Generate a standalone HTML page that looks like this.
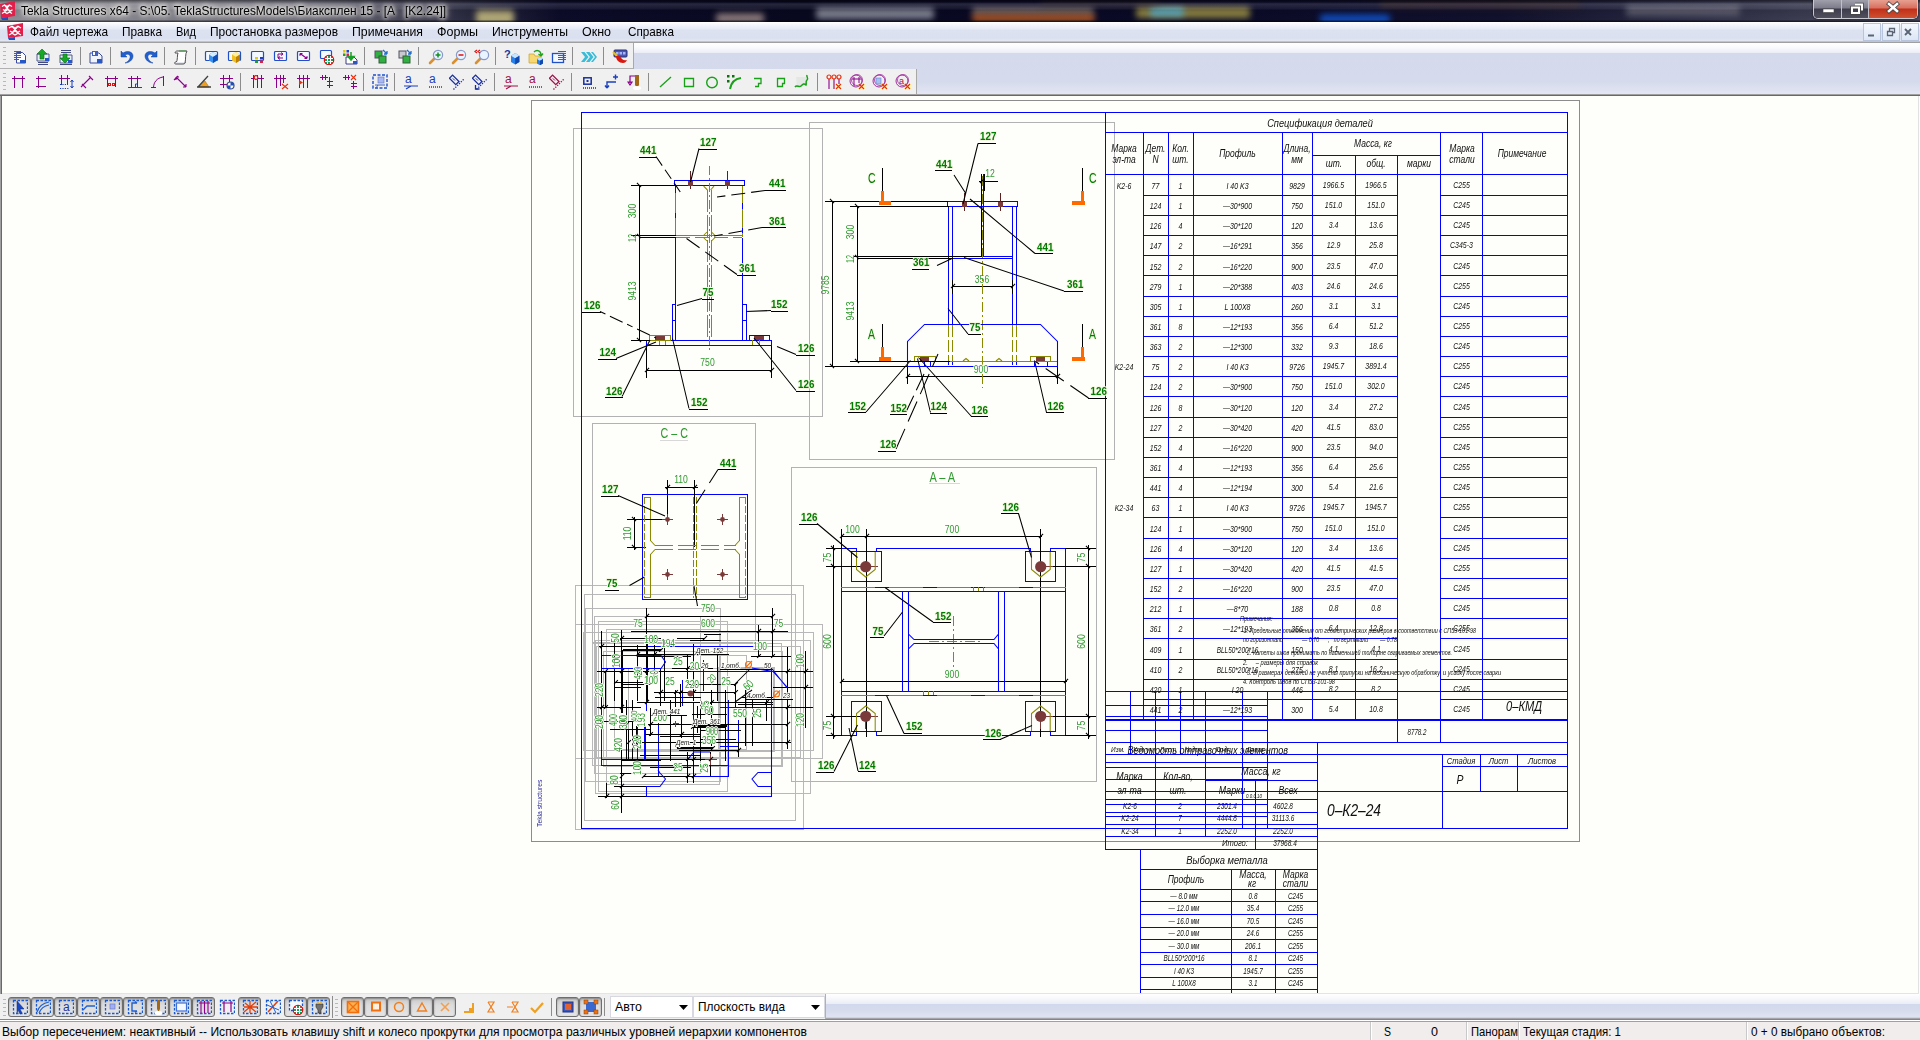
<!DOCTYPE html><html><head><meta charset="utf-8"><title>Tekla Structures</title><style>
*{box-sizing:border-box;margin:0;padding:0}
html,body{width:1920px;height:1040px;overflow:hidden;background:#fefefa;font-family:"Liberation Sans",sans-serif;font-size:12px;color:#000}
.abs{position:absolute}
#title{left:0;top:0;width:1920px;height:22px;background:linear-gradient(90deg,#8f8f97 0px,#85858f 120px,#6a6a78 300px,#2a2a40 470px,#0c0c2a 560px,#080820 800px,#0a0a28 1200px,#11112e 1500px,#2b2b44 1700px,#3c3c52 1800px,#4a4a60 1920px);overflow:hidden}
#title .shade{left:0;top:0;width:1920px;height:22px;background:linear-gradient(180deg,rgba(0,0,0,.45) 0,rgba(0,0,0,.15) 2px,rgba(255,255,255,.12) 4px,rgba(255,255,255,.05) 9px,rgba(0,0,0,.10) 10px,rgba(0,0,0,.0) 20px,rgba(0,0,0,.55) 21px)}
#title .blob{position:absolute;filter:blur(3px);border-radius:3px}
#ttext{left:21px;top:2px;height:18px;line-height:18px;font-size:12.6px;white-space:nowrap;color:#000;text-shadow:0 0 4px #fff,0 0 6px #fff,0 0 8px #e8e0d0,0 0 10px #d0c8b8;transform-origin:0 0}
#menu{left:0;top:22px;width:1920px;height:21px;background:linear-gradient(180deg,#ffffff 0,#f3f5fb 3px,#e6eaf6 7px,#dde2f1 8px,#dbe0f0 16px,#e4e8f4 19px,#a0a0a0 20px);}
.mi{position:absolute;top:3px;height:15px;line-height:15px;font-size:12.4px;white-space:nowrap;transform-origin:0 0}
#tb{left:0;top:43px;width:1920px;height:53px;background:linear-gradient(180deg,#ffffff 0,#fafbfd 4px,#eceef7 9.5px,#d4d9ec 10px,#d5daec 38px,#dde1f0 46px,#e4e7f3 51px,#a0a0a0 51px,#a0a0a0 52px,#696969 52px,#696969 53px)}
.tbl{position:absolute;background:#f0f0f0}
.sep{position:absolute;width:1px;background:#8c8c8c}
.grip{position:absolute;width:3px;height:18px;background:repeating-linear-gradient(180deg,#b8b8b8 0,#b8b8b8 1px,transparent 1px,transparent 4px)}
#btb{left:0;top:994px;width:1920px;height:28px;background:linear-gradient(180deg,#ffffff 0,#f8f9fc 4px,#eceef7 9.5px,#d3d9ec 10px,#d6dbed 16px,#dfe3f1 23px,#c0c0c8 24px,#8a8a8a 25px,#808080 26px,#ffffff 26px,#ffffff 27px,#a0a0a0 27px,#a0a0a0 28px)}
#status{left:0;top:1022px;width:1920px;height:18px;background:#f0edec}
.st{position:absolute;top:3px;height:15px;line-height:15px;font-size:12.4px;white-space:nowrap;transform-origin:0 0}
.pb{position:absolute;top:3px;width:23px;height:20px;border:1px solid #6e6e6e;border-radius:3px;background:linear-gradient(180deg,#c8c8c8,#dcdcdc 40%,#e4e4e4);box-shadow:inset 0 1px 2px rgba(0,0,0,.35)}
.combo{position:absolute;top:2px;height:22px;background:#fff;border:1px solid #d8d8e0;font-size:12.4px;line-height:20px;padding-left:4px;white-space:nowrap}
</style></head><body><div class="abs" style="left:0;top:96px;width:1920px;height:898px;overflow:hidden;background:#fefefa"><svg class="abs" style="left:0;top:-96px;will-change:transform" width="1920" height="1040" viewBox="0 0 1920 1040"><g shape-rendering="crispEdges" fill="none" stroke-width="1">
<path stroke="#b8b8b8" d="M575 585.5H804M575 829.5H804M575.5 585V830M803.5 585V830M584 594.5H796M584 820.5H796M584.5 594V821M795.5 594V821M585 608.5H721M585 781.5H721M585.5 608V782M720.5 608V782M594 616.5H701M594 773.5H701M594.5 616V774M700.5 616V774M598 621.5H728M598 791.5H728M598.5 621V792M727.5 621V792M575 624.5H823M575 758.5H823M575.5 624V759M822.5 624V759M606 629.5H720M606 784.5H720M606.5 629V785M719.5 629V785M583 632.5H814M583 750.5H814M583.5 632V751M813.5 632V751M592 643.5H782M592 765.5H782M592.5 643V766M781.5 643V766M603 651.5H783M603 766.5H783M603.5 651V767M782.5 651V767M628 668.5H774M628 751.5H774M628.5 668V752M773.5 668V752M595 640.5H811M595 793.5H811M595.5 640V794M810.5 640V794M614 655.5H747M614 749.5H747M614.5 655V750M746.5 655V750M718 667.5H775M718 751.5H775M718.5 667V752M774.5 667V752M596 646.5H801M596 757.5H801M596.5 646V758M800.5 646V758"/>
</g>
<g shape-rendering="crispEdges"></g>
<g fill="none" stroke-width="1.05">
</g>
<g font-family="Liberation Sans, sans-serif"></g><g shape-rendering="crispEdges" fill="none" stroke-width="1">
<path stroke="#8c8c8c" d="M531 100.5H1580M531 841.5H1580M531.5 100V842M1579.5 100V842"/>
<path stroke="#b2b2b2" d="M573 128.5H823M573 416.5H823M573.5 128V417M822.5 128V417M809 122.5H1115M809 459.5H1115M809.5 122V460M1114.5 122V460M592 423.5H756M592 642.5H756M592.5 423V643M755.5 423V643M791 467.5H1097M791 781.5H1097M791.5 467V782M1096.5 467V782"/>
<path stroke="#0000ff" d="M581 112.5H1568M581 828.5H1568M581.5 112V829M1567.5 112V829M674 180.5H745M674 185.5H745M674.5 180V186M744.5 180V186M675.5 186V193M675.5 213V218M675.5 238V341M742.5 203V209M742.5 228V233M742.5 238V341M672 304.5H676M672 340.5H676M672.5 304V341M675.5 304V341M742 304.5H747M742 340.5H747M742.5 304V341M746.5 304V341M672 320.5H676M742 320.5H747M646 340.5H772M646 345.5H772M646.5 340V346M771.5 340V346M749 335.5H770M749 340.5H770M749.5 335V341M769.5 335V341M664 335.5H671M947 201.5H1018M947 206.5H1018M947.5 201V207M1017.5 201V207M948.5 206V325M952.5 206V325M1012.5 206V325M1016.5 206V325M983.5 174V257M952 258.5H1013M984 256.5H1013M914 356.5H936M1030 356.5H1051M924.5 361V367M930.5 361V367M1034.5 361V367M1047.5 361V367M948.5 361V365M952.5 361V365M1012.5 361V365M1016.5 361V365M642 494.5H748M642 599.5H748M642.5 494V600M747.5 494V600M841 548.5H857M876 548.5H1031M1050 548.5H1066M856.5 548V552M876.5 548V552M1030.5 548V552M1050.5 548V552M841 735.5H857M876 735.5H1031M1050 735.5H1066M856.5 731V736M876.5 731V736M1030.5 731V736M1050.5 731V736M841.5 548V736M1065.5 548V736M851 551.5H882M851 581.5H882M851.5 551V582M881.5 551V582M851 701.5H882M851 731.5H882M851.5 701V732M881.5 701V732M1025 551.5H1056M1025 581.5H1056M1025.5 551V582M1055.5 551V582M1025 701.5H1056M1025 731.5H1056M1025.5 701V732M1055.5 701V732M841 591.5H1066M841 691.5H1066M841 587.5H1066M841 695.5H1066M902.5 591V692M908.5 591V692M998.5 591V692M1004.5 591V692M1105 132.5H1568M1105 174.5H1568M1312 155.5H1441M1105.5 112V850M1143.5 132V720M1168.5 132V720M1193.5 132V720M1282.5 132V720M1312.5 132V720M1482.5 132V720M1355.5 155V720M1397.5 155V743M1440.5 132V743M1143 195.5H1398M1440 195.5H1568M1143 215.5H1398M1440 215.5H1568M1143 235.5H1398M1440 235.5H1568M1143 255.5H1398M1440 255.5H1568M1143 275.5H1398M1440 275.5H1568M1143 296.5H1398M1440 296.5H1568M1143 316.5H1398M1440 316.5H1568M1143 336.5H1398M1440 336.5H1568M1143 356.5H1398M1440 356.5H1568M1143 376.5H1398M1440 376.5H1568M1143 396.5H1398M1440 396.5H1568M1143 417.5H1398M1440 417.5H1568M1143 437.5H1398M1440 437.5H1568M1143 457.5H1398M1440 457.5H1568M1143 477.5H1398M1440 477.5H1568M1143 497.5H1398M1440 497.5H1568M1143 517.5H1398M1440 517.5H1568M1143 538.5H1398M1440 538.5H1568M1143 558.5H1398M1440 558.5H1568M1143 578.5H1398M1440 578.5H1568M1143 598.5H1398M1440 598.5H1568M1143 618.5H1398M1440 618.5H1568M1143 638.5H1398M1440 638.5H1568M1143 659.5H1398M1440 659.5H1568M1143 679.5H1398M1440 679.5H1568M1143 699.5H1398M1440 699.5H1568M1143 719.5H1398M1440 719.5H1568M1105 719.5H1144M1397 719.5H1441M1105 720.5H1568M1105 742.5H1568M1105 691.5H1568M1130.5 691V755M1155.5 691V755M1180.5 691V755M1205.5 691V755M1242.5 691V755M1267.5 691V829M1155.5 754V829M1205.5 754V829M1242.5 754V829M1105 705.5H1268M1105 716.5H1268M1105 730.5H1268M1105 767.5H1268M1105 779.5H1268M1105 791.5H1268M1105 804.5H1268M1105 816.5H1268M1105 754.5H1568M1267 791.5H1568M1442 766.5H1568M1442.5 754V829M1480.5 754V792M1517.5 754V792M1317.5 742V994M1105 762.5H1318M1205 780.5H1318M1105 799.5H1318M1105 812.5H1318M1105 824.5H1318M1105 836.5H1318M1105 849.5H1318M1155.5 762V837M1205.5 762V837M1255.5 780V850M1140 869.5H1318M1140 889.5H1318M1140 901.5H1318M1140 914.5H1318M1140 927.5H1318M1140 939.5H1318M1140 952.5H1318M1140 964.5H1318M1140 977.5H1318M1140 989.5H1318M1140.5 849V994M1231.5 869V994M1275.5 869V994"/>
<path stroke="#8a8a00" stroke-dasharray="9 3 2 3" d="M709.5 166V353"/>
<path stroke="#8a8a00" stroke-dasharray="22 3" d="M707.5 190V340M711.5 190V340"/>
<path stroke="#8a8a00" d="M676 235.5H742M675.5 193V213M675.5 218V236M742.5 186V203M742.5 209V228M742.5 233V237M659.5 340V345M665.5 340V345M752.5 340V345M759.5 340V345M649 335.5H671M649 340.5H671M649.5 335V341M670.5 335V341M914 361.5H1058M914 356.5H936M914 361.5H936M914.5 356V362M935.5 356V362M1030 356.5H1051M1030 361.5H1051M1030.5 356V362M1050.5 356V362M650.5 497V541M650.5 554V598M644 497.5H651M644 597.5H651M739.5 497V541M739.5 554V598M739 497.5H746M739 597.5H746M973.5 587V591M978.5 587V591M983.5 587V591M923.5 691V695M928.5 691V695M933.5 691V695"/>
<path stroke="#8a8a00" stroke-dasharray="14 5" d="M676 237.5H742"/>
<path stroke="#5a2020" d="M690.5 171V189M727.5 171V189M964.5 193V211M1000.5 193V211"/>
<path stroke="#000" d="M639.5 185V341M631 185.5H675M631 235.5H676M639 237.5H676M631 340.5H650M646 370.5H772M646.5 346V378M771.5 346V378M639 157.5H657M699 149.5H717M765 190.5H786M762 227.5H786M737 275.5H756M702 299.5H714M771 311.5H788M582 312.5H601M598 359.5H617M605 397.5H623M689 409.5H708M796 355.5H815M796 391.5H815M981.5 174V257M832.5 201V367M825 201.5H948M825 366.5H908M857.5 206V362M850 206.5H949M854 256.5H982M857 258.5H953M850 361.5H950M979 181.5H998M984.5 174V191M952 286.5H1013M952.5 280V294M1012.5 280V294M907 376.5H1058M907.5 366V384M1057.5 366V384M882.5 168V201M882.5 324V356M1082.5 168V201M1082.5 324V356M978 143.5H996M935 170.5H952M1035 253.5H1053M912 269.5H929M1064 291.5H1083M968 334.5H981M848 412.5H866M890 414.5H907M930 413.5H947M971 416.5H988M1046 412.5H1064M1088 398.5H1107M878 451.5H896M694.5 480V547M665 487.5H698M667.5 480V520M634.5 517V550M627 519.5H668M627 547.5H646M601 496.5H619M718 469.5H736M605 590.5H619M841 536.5H1042M841.5 529V549M866.5 529V737M1040.5 529V737M833.5 545V739M1088.5 545V739M826 548.5H842M1065 548.5H1096M826 566.5H867M1040 566.5H1096M826 716.5H867M1040 716.5H1096M826 735.5H842M1065 735.5H1096M841 681.5H1067M799 524.5H818M1001 513.5H1019M933 622.5H951M870 637.5H884M904 733.5H922M983 739.5H1001M816 772.5H834M858 771.5H876"/>
<path stroke="#8a8a00" stroke-dasharray="12 3" d="M948.5 325V361M952.5 325V361M1012.5 325V361M1016.5 325V361"/>
<path stroke="#8a8a00" stroke-dasharray="10 3 2 3" d="M982.5 176V388M953.5 616V669M929 641.5H980"/>
<path stroke="#d8d8d8" d="M660 440.5H688M929 483.5H960"/>
<path stroke="#8a8a00" stroke-dasharray="7 2" d="M644.5 497V598M745.5 497V598M693.5 497V598M696.5 497V598"/>
<path stroke="#8a8a00" stroke-dasharray="18 5" d="M655 545.5H736M655 549.5H736"/>
<path stroke="#7a3a3a" d="M662 519.5H673M667.5 514V525M717 519.5H728M722.5 514V525M662 574.5H673M667.5 569V580M717 574.5H728M722.5 569V580M871 566.5H878M871 716.5H878M865.5 722V729M1046 566.5H1053M1046 716.5H1053M1040.5 722V729"/>
<path stroke="#8a8a00" stroke-dasharray="34 14" d="M841 587.5H1066M841 695.5H1066"/>
</g>
<g shape-rendering="crispEdges"><rect x="655" y="336" width="10" height="4" fill="#7a3a3a"/><rect x="754" y="336" width="10" height="4" fill="#7a3a3a"/><rect x="688" y="181" width="5" height="5" fill="#7a3a3a"/><rect x="725" y="181" width="5" height="5" fill="#7a3a3a"/><rect x="920" y="357" width="9" height="4" fill="#7a3a3a"/><rect x="1036" y="357" width="9" height="4" fill="#7a3a3a"/><rect x="962" y="202" width="5" height="5" fill="#7a3a3a"/><rect x="998" y="202" width="5" height="5" fill="#7a3a3a"/><rect x="879" y="201" width="12" height="4" fill="#ff6a00"/><rect x="881" y="191" width="3" height="11" fill="#ff6a00"/><rect x="879" y="357" width="12" height="4" fill="#ff6a00"/><rect x="881" y="347" width="3" height="11" fill="#ff6a00"/><rect x="1072" y="201" width="13" height="4" fill="#ff6a00"/><rect x="1081" y="191" width="3" height="11" fill="#ff6a00"/><rect x="1072" y="357" width="13" height="4" fill="#ff6a00"/><rect x="1081" y="347" width="3" height="11" fill="#ff6a00"/></g>
<g fill="none" stroke-width="1.05">
<path stroke="#8a8a00" d="M703.6 186.2L707.5 190.0M714.0 186.2L710.6 190.0M703.5 235.5L707.0 232.0M715.0 235.5L711.5 232.0M703.5 237.5L707.0 241.0M715.0 237.5L711.5 241.0M963.0 361.0L966.0 358.5L969.0 361.0M996.0 361.0L999.0 358.5L1002.0 361.0M650.5 540.5L655.0 545.5M650.5 554.5L655.0 549.5M739.5 540.5L735.0 545.5M739.5 554.5L735.0 549.5M856.5 552.0L856.5 569.5L865.7 577.0L875.2 569.5L875.2 552.0M856.5 731.0L856.5 713.5L865.7 706.0L875.2 713.5L875.2 731.0M1031.5 552.0L1031.5 569.5L1040.7 577.0L1050.2 569.5L1050.2 552.0M1031.5 731.0L1031.5 713.5L1040.7 706.0L1050.2 713.5L1050.2 731.0"/>
<path stroke="#000" d="M636.9 182.9L641.1 187.1M636.9 233.9L641.1 238.1M636.9 337.9L641.1 342.1M644.9 372.1L649.1 367.9M769.9 372.1L774.1 367.9M699.0 148.5L690.5 182.0M702.0 298.5L677.0 305.5M771.0 310.5L746.0 311.5M616.0 358.5L656.0 342.0M622.0 396.5L650.0 340.0M689.0 408.5L672.5 338.5M796.0 354.5L777.0 346.5M796.0 390.5L754.0 338.0M829.9 198.9L834.1 203.1M829.9 363.9L834.1 368.1M854.9 203.9L859.1 208.1M854.9 254.9L859.1 259.1M854.9 358.9L859.1 363.1M979.9 183.1L984.1 178.9M950.9 288.1L955.1 283.9M1010.9 288.1L1015.1 283.9M905.9 378.1L910.1 373.9M1055.9 378.1L1060.1 373.9M978.0 143.5L963.0 204.0M954.0 175.0L965.5 193.0M1035.0 253.5L970.0 199.0M937.0 265.5L952.0 258.5M1064.0 291.0L964.0 257.5M968.0 334.0L948.0 308.5M866.0 412.0L910.5 360.5M930.5 412.5L917.5 358.5M971.5 416.5L918.5 357.5M1046.5 412.5L1034.5 360.5M665.9 489.1L670.1 484.9M692.9 489.1L697.1 484.9M631.9 516.9L636.1 521.1M631.9 544.9L636.1 549.1M618.0 495.5L665.0 516.0M629.5 585.5L644.5 577.0M694.0 586.0L697.5 606.0M839.9 538.1L844.1 533.9M864.9 538.1L869.1 533.9M1038.9 538.1L1043.1 533.9M830.9 545.9L835.1 550.1M1085.9 545.9L1090.1 550.1M830.9 563.9L835.1 568.1M1085.9 563.9L1090.1 568.1M830.9 713.9L835.1 718.1M1085.9 713.9L1090.1 718.1M830.9 732.9L835.1 737.1M1085.9 732.9L1090.1 737.1M839.9 683.1L844.1 678.9M1063.9 683.1L1068.1 678.9M817.0 523.5L857.5 557.5M1018.5 513.5L1031.5 557.5M933.0 622.0L885.0 587.5M884.0 636.0L902.5 612.0M904.0 733.5L886.5 695.5M1000.0 739.5L1032.0 725.5M834.0 771.5L857.5 725.0M858.0 771.0L849.0 728.0"/>
<path stroke="#000" stroke-dasharray="11 5" d="M656.0 156.5L683.0 196.0"/>
<path stroke="#000" stroke-dasharray="14 6" d="M765.0 190.5L717.0 197.0M762.0 227.5L714.0 236.0"/>
<path stroke="#000" stroke-dasharray="16 7" d="M737.0 274.5L683.0 236.0"/>
<path stroke="#000" stroke-dasharray="6 5 14 5" d="M600.0 311.5L656.0 338.0"/>
<path stroke="#0000ff" d="M924.5 324.5L1040.5 324.5L1057.5 341.5L1057.5 366.5L907.5 366.5L907.5 341.5ZM908.5 591.5L908.5 634.0L914.0 639.5L994.0 639.5L998.5 634.0L998.5 591.5M908.5 691.5L908.5 649.0L914.0 643.5L994.0 643.5L998.5 649.0L998.5 691.5"/>
<path stroke="#000" stroke-dasharray="22 8" d="M1088.5 398.0L1035.5 361.5M896.0 449.0L938.0 354.0"/>
<path stroke="#000" stroke-dasharray="18 6" d="M906.0 412.0L925.0 372.0"/>
<path stroke="#000" stroke-dasharray="16 8" d="M718.0 469.5L695.0 505.5"/>
</g>
<circle cx="667.5" cy="519.5" r="2.4" fill="#7a3a3a"/>
<circle cx="722.5" cy="519.5" r="2.4" fill="#7a3a3a"/>
<circle cx="667.5" cy="574.5" r="2.4" fill="#7a3a3a"/>
<circle cx="722.5" cy="574.5" r="2.4" fill="#7a3a3a"/>
<circle cx="865.7" cy="566.7" r="5.6" fill="#7a3a3a"/><circle cx="865.7" cy="716.3" r="5.6" fill="#7a3a3a"/>
<circle cx="1040.7" cy="566.7" r="5.6" fill="#7a3a3a"/><circle cx="1040.7" cy="716.3" r="5.6" fill="#7a3a3a"/>
<g font-family="Liberation Sans, sans-serif"><text transform="translate(636.0 211.0) rotate(-90) scale(0.73 1)" text-anchor="middle" style="font-size:11.8px;fill:#2f9a2f;">300</text><text transform="translate(636.0 238.0) rotate(-90) scale(0.73 1)" text-anchor="middle" style="font-size:10px;fill:#2f9a2f;">12</text><text transform="translate(636.0 291.0) rotate(-90) scale(0.73 1)" text-anchor="middle" style="font-size:11.8px;fill:#2f9a2f;">9413</text><text transform="translate(707.5 366.0) scale(0.73 1)" text-anchor="middle" style="font-size:11.8px;fill:#2f9a2f;">750</text><text transform="translate(640.0 154.4) scale(0.89 1)" text-anchor="start" style="font-size:11px;fill:#007a00;font-weight:bold;" stroke="#f4f8e0" stroke-width="2" paint-order="stroke" stroke-linejoin="round">441</text><text transform="translate(700.0 146.4) scale(0.89 1)" text-anchor="start" style="font-size:11px;fill:#007a00;font-weight:bold;" stroke="#f4f8e0" stroke-width="2" paint-order="stroke" stroke-linejoin="round">127</text><text transform="translate(769.0 187.4) scale(0.89 1)" text-anchor="start" style="font-size:11px;fill:#007a00;font-weight:bold;" stroke="#f4f8e0" stroke-width="2" paint-order="stroke" stroke-linejoin="round">441</text><text transform="translate(769.0 224.9) scale(0.89 1)" text-anchor="start" style="font-size:11px;fill:#007a00;font-weight:bold;" stroke="#f4f8e0" stroke-width="2" paint-order="stroke" stroke-linejoin="round">361</text><text transform="translate(739.0 272.4) scale(0.89 1)" text-anchor="start" style="font-size:11px;fill:#007a00;font-weight:bold;" stroke="#f4f8e0" stroke-width="2" paint-order="stroke" stroke-linejoin="round">361</text><text transform="translate(702.5 296.4) scale(0.89 1)" text-anchor="start" style="font-size:11px;fill:#007a00;font-weight:bold;" stroke="#f4f8e0" stroke-width="2" paint-order="stroke" stroke-linejoin="round">75</text><text transform="translate(771.0 308.4) scale(0.89 1)" text-anchor="start" style="font-size:11px;fill:#007a00;font-weight:bold;" stroke="#f4f8e0" stroke-width="2" paint-order="stroke" stroke-linejoin="round">152</text><text transform="translate(584.0 309.4) scale(0.89 1)" text-anchor="start" style="font-size:11px;fill:#007a00;font-weight:bold;" stroke="#f4f8e0" stroke-width="2" paint-order="stroke" stroke-linejoin="round">126</text><text transform="translate(599.5 356.4) scale(0.89 1)" text-anchor="start" style="font-size:11px;fill:#007a00;font-weight:bold;" stroke="#f4f8e0" stroke-width="2" paint-order="stroke" stroke-linejoin="round">124</text><text transform="translate(606.0 394.9) scale(0.89 1)" text-anchor="start" style="font-size:11px;fill:#007a00;font-weight:bold;" stroke="#f4f8e0" stroke-width="2" paint-order="stroke" stroke-linejoin="round">126</text><text transform="translate(691.0 406.4) scale(0.89 1)" text-anchor="start" style="font-size:11px;fill:#007a00;font-weight:bold;" stroke="#f4f8e0" stroke-width="2" paint-order="stroke" stroke-linejoin="round">152</text><text transform="translate(798.0 352.4) scale(0.89 1)" text-anchor="start" style="font-size:11px;fill:#007a00;font-weight:bold;" stroke="#f4f8e0" stroke-width="2" paint-order="stroke" stroke-linejoin="round">126</text><text transform="translate(798.0 388.4) scale(0.89 1)" text-anchor="start" style="font-size:11px;fill:#007a00;font-weight:bold;" stroke="#f4f8e0" stroke-width="2" paint-order="stroke" stroke-linejoin="round">126</text><text transform="translate(829.0 285.0) rotate(-90) scale(0.73 1)" text-anchor="middle" style="font-size:11.8px;fill:#2f9a2f;">9785</text><text transform="translate(854.0 232.0) rotate(-90) scale(0.73 1)" text-anchor="middle" style="font-size:11.8px;fill:#2f9a2f;">300</text><text transform="translate(854.0 259.0) rotate(-90) scale(0.73 1)" text-anchor="middle" style="font-size:10px;fill:#2f9a2f;">12</text><text transform="translate(854.0 311.0) rotate(-90) scale(0.73 1)" text-anchor="middle" style="font-size:11.8px;fill:#2f9a2f;">9413</text><text transform="translate(990.0 177.0) scale(0.73 1)" text-anchor="middle" style="font-size:11.8px;fill:#2f9a2f;">12</text><text transform="translate(982.0 282.5) scale(0.73 1)" text-anchor="middle" style="font-size:11.8px;fill:#2f9a2f;">356</text><text transform="translate(981.0 372.5) scale(0.73 1)" text-anchor="middle" style="font-size:11.8px;fill:#2f9a2f;" stroke="#fefefa" stroke-width="2" paint-order="stroke" stroke-linejoin="round">900</text><text transform="translate(868.0 183.0) scale(0.72 1)" text-anchor="start" style="font-size:14.5px;fill:#007a00;" stroke="#f4f8e0" stroke-width="2" paint-order="stroke" stroke-linejoin="round">C</text><text transform="translate(868.0 339.0) scale(0.72 1)" text-anchor="start" style="font-size:14.5px;fill:#007a00;" stroke="#f4f8e0" stroke-width="2" paint-order="stroke" stroke-linejoin="round">A</text><text transform="translate(1089.0 183.0) scale(0.72 1)" text-anchor="start" style="font-size:14.5px;fill:#007a00;" stroke="#f4f8e0" stroke-width="2" paint-order="stroke" stroke-linejoin="round">C</text><text transform="translate(1089.0 339.0) scale(0.72 1)" text-anchor="start" style="font-size:14.5px;fill:#007a00;" stroke="#f4f8e0" stroke-width="2" paint-order="stroke" stroke-linejoin="round">A</text><text transform="translate(980.0 140.4) scale(0.89 1)" text-anchor="start" style="font-size:11px;fill:#007a00;font-weight:bold;" stroke="#f4f8e0" stroke-width="2" paint-order="stroke" stroke-linejoin="round">127</text><text transform="translate(936.0 167.9) scale(0.89 1)" text-anchor="start" style="font-size:11px;fill:#007a00;font-weight:bold;" stroke="#f4f8e0" stroke-width="2" paint-order="stroke" stroke-linejoin="round">441</text><text transform="translate(1037.0 250.9) scale(0.89 1)" text-anchor="start" style="font-size:11px;fill:#007a00;font-weight:bold;" stroke="#f4f8e0" stroke-width="2" paint-order="stroke" stroke-linejoin="round">441</text><text transform="translate(913.0 266.4) scale(0.89 1)" text-anchor="start" style="font-size:11px;fill:#007a00;font-weight:bold;" stroke="#f4f8e0" stroke-width="2" paint-order="stroke" stroke-linejoin="round">361</text><text transform="translate(1067.0 288.4) scale(0.89 1)" text-anchor="start" style="font-size:11px;fill:#007a00;font-weight:bold;" stroke="#f4f8e0" stroke-width="2" paint-order="stroke" stroke-linejoin="round">361</text><text transform="translate(969.5 331.4) scale(0.89 1)" text-anchor="start" style="font-size:11px;fill:#007a00;font-weight:bold;" stroke="#f4f8e0" stroke-width="2" paint-order="stroke" stroke-linejoin="round">75</text><text transform="translate(849.5 409.9) scale(0.89 1)" text-anchor="start" style="font-size:11px;fill:#007a00;font-weight:bold;" stroke="#f4f8e0" stroke-width="2" paint-order="stroke" stroke-linejoin="round">152</text><text transform="translate(890.5 411.9) scale(0.89 1)" text-anchor="start" style="font-size:11px;fill:#007a00;font-weight:bold;" stroke="#f4f8e0" stroke-width="2" paint-order="stroke" stroke-linejoin="round">152</text><text transform="translate(930.5 410.4) scale(0.89 1)" text-anchor="start" style="font-size:11px;fill:#007a00;font-weight:bold;" stroke="#f4f8e0" stroke-width="2" paint-order="stroke" stroke-linejoin="round">124</text><text transform="translate(971.5 413.9) scale(0.89 1)" text-anchor="start" style="font-size:11px;fill:#007a00;font-weight:bold;" stroke="#f4f8e0" stroke-width="2" paint-order="stroke" stroke-linejoin="round">126</text><text transform="translate(1047.5 409.9) scale(0.89 1)" text-anchor="start" style="font-size:11px;fill:#007a00;font-weight:bold;" stroke="#f4f8e0" stroke-width="2" paint-order="stroke" stroke-linejoin="round">126</text><text transform="translate(1090.5 395.4) scale(0.89 1)" text-anchor="start" style="font-size:11px;fill:#007a00;font-weight:bold;" stroke="#f4f8e0" stroke-width="2" paint-order="stroke" stroke-linejoin="round">126</text><text transform="translate(880.0 448.4) scale(0.89 1)" text-anchor="start" style="font-size:11px;fill:#007a00;font-weight:bold;" stroke="#f4f8e0" stroke-width="2" paint-order="stroke" stroke-linejoin="round">126</text><text transform="translate(660.5 438.0) scale(0.74 1)" text-anchor="start" style="font-size:14.5px;fill:#2f9a2f;">C – C</text><text transform="translate(681.0 483.0) scale(0.73 1)" text-anchor="middle" style="font-size:11.8px;fill:#2f9a2f;">110</text><text transform="translate(631.0 533.5) rotate(-90) scale(0.73 1)" text-anchor="middle" style="font-size:11.8px;fill:#2f9a2f;">110</text><text transform="translate(602.0 493.4) scale(0.89 1)" text-anchor="start" style="font-size:11px;fill:#007a00;font-weight:bold;" stroke="#f4f8e0" stroke-width="2" paint-order="stroke" stroke-linejoin="round">127</text><text transform="translate(720.0 466.9) scale(0.89 1)" text-anchor="start" style="font-size:11px;fill:#007a00;font-weight:bold;" stroke="#f4f8e0" stroke-width="2" paint-order="stroke" stroke-linejoin="round">441</text><text transform="translate(606.5 587.4) scale(0.89 1)" text-anchor="start" style="font-size:11px;fill:#007a00;font-weight:bold;" stroke="#f4f8e0" stroke-width="2" paint-order="stroke" stroke-linejoin="round">75</text><text transform="translate(929.5 481.5) scale(0.76 1)" text-anchor="start" style="font-size:14.5px;fill:#2f9a2f;">A –  A</text><text transform="translate(852.5 532.5) scale(0.73 1)" text-anchor="middle" style="font-size:11.8px;fill:#2f9a2f;">100</text><text transform="translate(952.0 532.5) scale(0.73 1)" text-anchor="middle" style="font-size:11.8px;fill:#2f9a2f;">700</text><text transform="translate(952.0 677.5) scale(0.73 1)" text-anchor="middle" style="font-size:11.8px;fill:#2f9a2f;">900</text><text transform="translate(830.5 557.5) rotate(-90) scale(0.73 1)" text-anchor="middle" style="font-size:11.8px;fill:#2f9a2f;">75</text><text transform="translate(830.5 641.5) rotate(-90) scale(0.73 1)" text-anchor="middle" style="font-size:11.8px;fill:#2f9a2f;">600</text><text transform="translate(830.5 725.5) rotate(-90) scale(0.73 1)" text-anchor="middle" style="font-size:11.8px;fill:#2f9a2f;">75</text><text transform="translate(1085.0 557.5) rotate(-90) scale(0.73 1)" text-anchor="middle" style="font-size:11.8px;fill:#2f9a2f;">75</text><text transform="translate(1085.0 641.5) rotate(-90) scale(0.73 1)" text-anchor="middle" style="font-size:11.8px;fill:#2f9a2f;">600</text><text transform="translate(1085.0 725.5) rotate(-90) scale(0.73 1)" text-anchor="middle" style="font-size:11.8px;fill:#2f9a2f;">75</text><text transform="translate(801.0 521.4) scale(0.89 1)" text-anchor="start" style="font-size:11px;fill:#007a00;font-weight:bold;" stroke="#f4f8e0" stroke-width="2" paint-order="stroke" stroke-linejoin="round">126</text><text transform="translate(1002.5 510.9) scale(0.89 1)" text-anchor="start" style="font-size:11px;fill:#007a00;font-weight:bold;" stroke="#f4f8e0" stroke-width="2" paint-order="stroke" stroke-linejoin="round">126</text><text transform="translate(935.0 619.9) scale(0.89 1)" text-anchor="start" style="font-size:11px;fill:#007a00;font-weight:bold;" stroke="#f4f8e0" stroke-width="2" paint-order="stroke" stroke-linejoin="round">152</text><text transform="translate(872.5 634.9) scale(0.89 1)" text-anchor="start" style="font-size:11px;fill:#007a00;font-weight:bold;" stroke="#f4f8e0" stroke-width="2" paint-order="stroke" stroke-linejoin="round">75</text><text transform="translate(906.0 730.4) scale(0.89 1)" text-anchor="start" style="font-size:11px;fill:#007a00;font-weight:bold;" stroke="#f4f8e0" stroke-width="2" paint-order="stroke" stroke-linejoin="round">152</text><text transform="translate(985.0 736.9) scale(0.89 1)" text-anchor="start" style="font-size:11px;fill:#007a00;font-weight:bold;" stroke="#f4f8e0" stroke-width="2" paint-order="stroke" stroke-linejoin="round">126</text><text transform="translate(818.0 769.4) scale(0.89 1)" text-anchor="start" style="font-size:11px;fill:#007a00;font-weight:bold;" stroke="#f4f8e0" stroke-width="2" paint-order="stroke" stroke-linejoin="round">126</text><text transform="translate(859.0 768.9) scale(0.89 1)" text-anchor="start" style="font-size:11px;fill:#007a00;font-weight:bold;" stroke="#f4f8e0" stroke-width="2" paint-order="stroke" stroke-linejoin="round">124</text><text transform="translate(542.0 827.0) rotate(-90) scale(0.97 1)" text-anchor="start" style="font-size:7px;fill:#2a2a98;">Tekla structures</text><text transform="translate(1320.0 127.0) scale(0.84 1)" text-anchor="middle" style="font-size:11px;fill:#101010;font-style:italic;">Спецификация деталей</text><text transform="translate(1124.0 152.3) scale(0.8 1)" text-anchor="middle" style="font-size:10.6px;fill:#101010;font-style:italic;">Марка</text><text transform="translate(1124.0 162.7) scale(0.8 1)" text-anchor="middle" style="font-size:10.6px;fill:#101010;font-style:italic;">эл-та</text><text transform="translate(1155.5 152.3) scale(0.8 1)" text-anchor="middle" style="font-size:10.6px;fill:#101010;font-style:italic;">Дет.</text><text transform="translate(1155.5 162.7) scale(0.8 1)" text-anchor="middle" style="font-size:10.6px;fill:#101010;font-style:italic;">N</text><text transform="translate(1180.5 152.3) scale(0.8 1)" text-anchor="middle" style="font-size:10.6px;fill:#101010;font-style:italic;">Кол.</text><text transform="translate(1180.5 162.7) scale(0.8 1)" text-anchor="middle" style="font-size:10.6px;fill:#101010;font-style:italic;">шт.</text><text transform="translate(1237.5 157.0) scale(0.8 1)" text-anchor="middle" style="font-size:10.6px;fill:#101010;font-style:italic;">Профиль</text><text transform="translate(1297.0 152.3) scale(0.8 1)" text-anchor="middle" style="font-size:10.6px;fill:#101010;font-style:italic;">Длина,</text><text transform="translate(1297.0 162.7) scale(0.8 1)" text-anchor="middle" style="font-size:10.6px;fill:#101010;font-style:italic;">мм</text><text transform="translate(1373.0 147.0) scale(0.8 1)" text-anchor="middle" style="font-size:10.6px;fill:#101010;font-style:italic;">Масса, кг</text><text transform="translate(1334.0 167.0) scale(0.8 1)" text-anchor="middle" style="font-size:10.6px;fill:#101010;font-style:italic;">шт.</text><text transform="translate(1376.0 167.0) scale(0.8 1)" text-anchor="middle" style="font-size:10.6px;fill:#101010;font-style:italic;">общ.</text><text transform="translate(1419.0 167.0) scale(0.8 1)" text-anchor="middle" style="font-size:10.6px;fill:#101010;font-style:italic;">марки</text><text transform="translate(1462.0 152.3) scale(0.8 1)" text-anchor="middle" style="font-size:10.6px;fill:#101010;font-style:italic;">Марка</text><text transform="translate(1462.0 162.7) scale(0.8 1)" text-anchor="middle" style="font-size:10.6px;fill:#101010;font-style:italic;">стали</text><text transform="translate(1522.0 157.0) scale(0.8 1)" text-anchor="middle" style="font-size:10.6px;fill:#101010;font-style:italic;">Примечание</text><text transform="translate(1124.0 188.8) scale(0.76 1)" text-anchor="middle" style="font-size:9.2px;fill:#101010;font-style:italic;">K2-6</text><text transform="translate(1155.5 188.8) scale(0.76 1)" text-anchor="middle" style="font-size:9.2px;fill:#101010;font-style:italic;">77</text><text transform="translate(1180.5 188.8) scale(0.76 1)" text-anchor="middle" style="font-size:9.2px;fill:#101010;font-style:italic;">1</text><text transform="translate(1237.5 188.8) scale(0.76 1)" text-anchor="middle" style="font-size:9.2px;fill:#101010;font-style:italic;">I 40 K3</text><text transform="translate(1297.0 188.8) scale(0.76 1)" text-anchor="middle" style="font-size:9.2px;fill:#101010;font-style:italic;">9829</text><text transform="translate(1333.5 187.8) scale(0.76 1)" text-anchor="middle" style="font-size:9.2px;fill:#101010;font-style:italic;">1966.5</text><text transform="translate(1376.0 187.8) scale(0.76 1)" text-anchor="middle" style="font-size:9.2px;fill:#101010;font-style:italic;">1966.5</text><text transform="translate(1461.5 187.8) scale(0.76 1)" text-anchor="middle" style="font-size:9.2px;fill:#101010;font-style:italic;">C255</text><text transform="translate(1155.5 209.0) scale(0.76 1)" text-anchor="middle" style="font-size:9.2px;fill:#101010;font-style:italic;">124</text><text transform="translate(1180.5 209.0) scale(0.76 1)" text-anchor="middle" style="font-size:9.2px;fill:#101010;font-style:italic;">1</text><text transform="translate(1237.5 209.0) scale(0.76 1)" text-anchor="middle" style="font-size:9.2px;fill:#101010;font-style:italic;">—30*900</text><text transform="translate(1297.0 209.0) scale(0.76 1)" text-anchor="middle" style="font-size:9.2px;fill:#101010;font-style:italic;">750</text><text transform="translate(1333.5 208.0) scale(0.76 1)" text-anchor="middle" style="font-size:9.2px;fill:#101010;font-style:italic;">151.0</text><text transform="translate(1376.0 208.0) scale(0.76 1)" text-anchor="middle" style="font-size:9.2px;fill:#101010;font-style:italic;">151.0</text><text transform="translate(1461.5 208.0) scale(0.76 1)" text-anchor="middle" style="font-size:9.2px;fill:#101010;font-style:italic;">C245</text><text transform="translate(1155.5 229.1) scale(0.76 1)" text-anchor="middle" style="font-size:9.2px;fill:#101010;font-style:italic;">126</text><text transform="translate(1180.5 229.1) scale(0.76 1)" text-anchor="middle" style="font-size:9.2px;fill:#101010;font-style:italic;">4</text><text transform="translate(1237.5 229.1) scale(0.76 1)" text-anchor="middle" style="font-size:9.2px;fill:#101010;font-style:italic;">—30*120</text><text transform="translate(1297.0 229.1) scale(0.76 1)" text-anchor="middle" style="font-size:9.2px;fill:#101010;font-style:italic;">120</text><text transform="translate(1333.5 228.1) scale(0.76 1)" text-anchor="middle" style="font-size:9.2px;fill:#101010;font-style:italic;">3.4</text><text transform="translate(1376.0 228.1) scale(0.76 1)" text-anchor="middle" style="font-size:9.2px;fill:#101010;font-style:italic;">13.6</text><text transform="translate(1461.5 228.1) scale(0.76 1)" text-anchor="middle" style="font-size:9.2px;fill:#101010;font-style:italic;">C245</text><text transform="translate(1155.5 249.3) scale(0.76 1)" text-anchor="middle" style="font-size:9.2px;fill:#101010;font-style:italic;">147</text><text transform="translate(1180.5 249.3) scale(0.76 1)" text-anchor="middle" style="font-size:9.2px;fill:#101010;font-style:italic;">2</text><text transform="translate(1237.5 249.3) scale(0.76 1)" text-anchor="middle" style="font-size:9.2px;fill:#101010;font-style:italic;">—16*291</text><text transform="translate(1297.0 249.3) scale(0.76 1)" text-anchor="middle" style="font-size:9.2px;fill:#101010;font-style:italic;">356</text><text transform="translate(1333.5 248.3) scale(0.76 1)" text-anchor="middle" style="font-size:9.2px;fill:#101010;font-style:italic;">12.9</text><text transform="translate(1376.0 248.3) scale(0.76 1)" text-anchor="middle" style="font-size:9.2px;fill:#101010;font-style:italic;">25.8</text><text transform="translate(1461.5 248.3) scale(0.76 1)" text-anchor="middle" style="font-size:9.2px;fill:#101010;font-style:italic;">C345-3</text><text transform="translate(1155.5 269.5) scale(0.76 1)" text-anchor="middle" style="font-size:9.2px;fill:#101010;font-style:italic;">152</text><text transform="translate(1180.5 269.5) scale(0.76 1)" text-anchor="middle" style="font-size:9.2px;fill:#101010;font-style:italic;">2</text><text transform="translate(1237.5 269.5) scale(0.76 1)" text-anchor="middle" style="font-size:9.2px;fill:#101010;font-style:italic;">—16*220</text><text transform="translate(1297.0 269.5) scale(0.76 1)" text-anchor="middle" style="font-size:9.2px;fill:#101010;font-style:italic;">900</text><text transform="translate(1333.5 268.5) scale(0.76 1)" text-anchor="middle" style="font-size:9.2px;fill:#101010;font-style:italic;">23.5</text><text transform="translate(1376.0 268.5) scale(0.76 1)" text-anchor="middle" style="font-size:9.2px;fill:#101010;font-style:italic;">47.0</text><text transform="translate(1461.5 268.5) scale(0.76 1)" text-anchor="middle" style="font-size:9.2px;fill:#101010;font-style:italic;">C245</text><text transform="translate(1155.5 289.6) scale(0.76 1)" text-anchor="middle" style="font-size:9.2px;fill:#101010;font-style:italic;">279</text><text transform="translate(1180.5 289.6) scale(0.76 1)" text-anchor="middle" style="font-size:9.2px;fill:#101010;font-style:italic;">1</text><text transform="translate(1237.5 289.6) scale(0.76 1)" text-anchor="middle" style="font-size:9.2px;fill:#101010;font-style:italic;">—20*388</text><text transform="translate(1297.0 289.6) scale(0.76 1)" text-anchor="middle" style="font-size:9.2px;fill:#101010;font-style:italic;">403</text><text transform="translate(1333.5 288.6) scale(0.76 1)" text-anchor="middle" style="font-size:9.2px;fill:#101010;font-style:italic;">24.6</text><text transform="translate(1376.0 288.6) scale(0.76 1)" text-anchor="middle" style="font-size:9.2px;fill:#101010;font-style:italic;">24.6</text><text transform="translate(1461.5 288.6) scale(0.76 1)" text-anchor="middle" style="font-size:9.2px;fill:#101010;font-style:italic;">C255</text><text transform="translate(1155.5 309.8) scale(0.76 1)" text-anchor="middle" style="font-size:9.2px;fill:#101010;font-style:italic;">305</text><text transform="translate(1180.5 309.8) scale(0.76 1)" text-anchor="middle" style="font-size:9.2px;fill:#101010;font-style:italic;">1</text><text transform="translate(1237.5 309.8) scale(0.76 1)" text-anchor="middle" style="font-size:9.2px;fill:#101010;font-style:italic;">L 100X8</text><text transform="translate(1297.0 309.8) scale(0.76 1)" text-anchor="middle" style="font-size:9.2px;fill:#101010;font-style:italic;">260</text><text transform="translate(1333.5 308.8) scale(0.76 1)" text-anchor="middle" style="font-size:9.2px;fill:#101010;font-style:italic;">3.1</text><text transform="translate(1376.0 308.8) scale(0.76 1)" text-anchor="middle" style="font-size:9.2px;fill:#101010;font-style:italic;">3.1</text><text transform="translate(1461.5 308.8) scale(0.76 1)" text-anchor="middle" style="font-size:9.2px;fill:#101010;font-style:italic;">C245</text><text transform="translate(1155.5 330.0) scale(0.76 1)" text-anchor="middle" style="font-size:9.2px;fill:#101010;font-style:italic;">361</text><text transform="translate(1180.5 330.0) scale(0.76 1)" text-anchor="middle" style="font-size:9.2px;fill:#101010;font-style:italic;">8</text><text transform="translate(1237.5 330.0) scale(0.76 1)" text-anchor="middle" style="font-size:9.2px;fill:#101010;font-style:italic;">—12*193</text><text transform="translate(1297.0 330.0) scale(0.76 1)" text-anchor="middle" style="font-size:9.2px;fill:#101010;font-style:italic;">356</text><text transform="translate(1333.5 329.0) scale(0.76 1)" text-anchor="middle" style="font-size:9.2px;fill:#101010;font-style:italic;">6.4</text><text transform="translate(1376.0 329.0) scale(0.76 1)" text-anchor="middle" style="font-size:9.2px;fill:#101010;font-style:italic;">51.2</text><text transform="translate(1461.5 329.0) scale(0.76 1)" text-anchor="middle" style="font-size:9.2px;fill:#101010;font-style:italic;">C255</text><text transform="translate(1155.5 350.1) scale(0.76 1)" text-anchor="middle" style="font-size:9.2px;fill:#101010;font-style:italic;">363</text><text transform="translate(1180.5 350.1) scale(0.76 1)" text-anchor="middle" style="font-size:9.2px;fill:#101010;font-style:italic;">2</text><text transform="translate(1237.5 350.1) scale(0.76 1)" text-anchor="middle" style="font-size:9.2px;fill:#101010;font-style:italic;">—12*300</text><text transform="translate(1297.0 350.1) scale(0.76 1)" text-anchor="middle" style="font-size:9.2px;fill:#101010;font-style:italic;">332</text><text transform="translate(1333.5 349.1) scale(0.76 1)" text-anchor="middle" style="font-size:9.2px;fill:#101010;font-style:italic;">9.3</text><text transform="translate(1376.0 349.1) scale(0.76 1)" text-anchor="middle" style="font-size:9.2px;fill:#101010;font-style:italic;">18.6</text><text transform="translate(1461.5 349.1) scale(0.76 1)" text-anchor="middle" style="font-size:9.2px;fill:#101010;font-style:italic;">C245</text><text transform="translate(1124.0 370.3) scale(0.76 1)" text-anchor="middle" style="font-size:9.2px;fill:#101010;font-style:italic;">K2-24</text><text transform="translate(1155.5 370.3) scale(0.76 1)" text-anchor="middle" style="font-size:9.2px;fill:#101010;font-style:italic;">75</text><text transform="translate(1180.5 370.3) scale(0.76 1)" text-anchor="middle" style="font-size:9.2px;fill:#101010;font-style:italic;">2</text><text transform="translate(1237.5 370.3) scale(0.76 1)" text-anchor="middle" style="font-size:9.2px;fill:#101010;font-style:italic;">I 40 K3</text><text transform="translate(1297.0 370.3) scale(0.76 1)" text-anchor="middle" style="font-size:9.2px;fill:#101010;font-style:italic;">9726</text><text transform="translate(1333.5 369.3) scale(0.76 1)" text-anchor="middle" style="font-size:9.2px;fill:#101010;font-style:italic;">1945.7</text><text transform="translate(1376.0 369.3) scale(0.76 1)" text-anchor="middle" style="font-size:9.2px;fill:#101010;font-style:italic;">3891.4</text><text transform="translate(1461.5 369.3) scale(0.76 1)" text-anchor="middle" style="font-size:9.2px;fill:#101010;font-style:italic;">C255</text><text transform="translate(1155.5 390.4) scale(0.76 1)" text-anchor="middle" style="font-size:9.2px;fill:#101010;font-style:italic;">124</text><text transform="translate(1180.5 390.4) scale(0.76 1)" text-anchor="middle" style="font-size:9.2px;fill:#101010;font-style:italic;">2</text><text transform="translate(1237.5 390.4) scale(0.76 1)" text-anchor="middle" style="font-size:9.2px;fill:#101010;font-style:italic;">—30*900</text><text transform="translate(1297.0 390.4) scale(0.76 1)" text-anchor="middle" style="font-size:9.2px;fill:#101010;font-style:italic;">750</text><text transform="translate(1333.5 389.4) scale(0.76 1)" text-anchor="middle" style="font-size:9.2px;fill:#101010;font-style:italic;">151.0</text><text transform="translate(1376.0 389.4) scale(0.76 1)" text-anchor="middle" style="font-size:9.2px;fill:#101010;font-style:italic;">302.0</text><text transform="translate(1461.5 389.4) scale(0.76 1)" text-anchor="middle" style="font-size:9.2px;fill:#101010;font-style:italic;">C245</text><text transform="translate(1155.5 410.6) scale(0.76 1)" text-anchor="middle" style="font-size:9.2px;fill:#101010;font-style:italic;">126</text><text transform="translate(1180.5 410.6) scale(0.76 1)" text-anchor="middle" style="font-size:9.2px;fill:#101010;font-style:italic;">8</text><text transform="translate(1237.5 410.6) scale(0.76 1)" text-anchor="middle" style="font-size:9.2px;fill:#101010;font-style:italic;">—30*120</text><text transform="translate(1297.0 410.6) scale(0.76 1)" text-anchor="middle" style="font-size:9.2px;fill:#101010;font-style:italic;">120</text><text transform="translate(1333.5 409.6) scale(0.76 1)" text-anchor="middle" style="font-size:9.2px;fill:#101010;font-style:italic;">3.4</text><text transform="translate(1376.0 409.6) scale(0.76 1)" text-anchor="middle" style="font-size:9.2px;fill:#101010;font-style:italic;">27.2</text><text transform="translate(1461.5 409.6) scale(0.76 1)" text-anchor="middle" style="font-size:9.2px;fill:#101010;font-style:italic;">C245</text><text transform="translate(1155.5 430.8) scale(0.76 1)" text-anchor="middle" style="font-size:9.2px;fill:#101010;font-style:italic;">127</text><text transform="translate(1180.5 430.8) scale(0.76 1)" text-anchor="middle" style="font-size:9.2px;fill:#101010;font-style:italic;">2</text><text transform="translate(1237.5 430.8) scale(0.76 1)" text-anchor="middle" style="font-size:9.2px;fill:#101010;font-style:italic;">—30*420</text><text transform="translate(1297.0 430.8) scale(0.76 1)" text-anchor="middle" style="font-size:9.2px;fill:#101010;font-style:italic;">420</text><text transform="translate(1333.5 429.8) scale(0.76 1)" text-anchor="middle" style="font-size:9.2px;fill:#101010;font-style:italic;">41.5</text><text transform="translate(1376.0 429.8) scale(0.76 1)" text-anchor="middle" style="font-size:9.2px;fill:#101010;font-style:italic;">83.0</text><text transform="translate(1461.5 429.8) scale(0.76 1)" text-anchor="middle" style="font-size:9.2px;fill:#101010;font-style:italic;">C255</text><text transform="translate(1155.5 450.9) scale(0.76 1)" text-anchor="middle" style="font-size:9.2px;fill:#101010;font-style:italic;">152</text><text transform="translate(1180.5 450.9) scale(0.76 1)" text-anchor="middle" style="font-size:9.2px;fill:#101010;font-style:italic;">4</text><text transform="translate(1237.5 450.9) scale(0.76 1)" text-anchor="middle" style="font-size:9.2px;fill:#101010;font-style:italic;">—16*220</text><text transform="translate(1297.0 450.9) scale(0.76 1)" text-anchor="middle" style="font-size:9.2px;fill:#101010;font-style:italic;">900</text><text transform="translate(1333.5 449.9) scale(0.76 1)" text-anchor="middle" style="font-size:9.2px;fill:#101010;font-style:italic;">23.5</text><text transform="translate(1376.0 449.9) scale(0.76 1)" text-anchor="middle" style="font-size:9.2px;fill:#101010;font-style:italic;">94.0</text><text transform="translate(1461.5 449.9) scale(0.76 1)" text-anchor="middle" style="font-size:9.2px;fill:#101010;font-style:italic;">C245</text><text transform="translate(1155.5 471.1) scale(0.76 1)" text-anchor="middle" style="font-size:9.2px;fill:#101010;font-style:italic;">361</text><text transform="translate(1180.5 471.1) scale(0.76 1)" text-anchor="middle" style="font-size:9.2px;fill:#101010;font-style:italic;">4</text><text transform="translate(1237.5 471.1) scale(0.76 1)" text-anchor="middle" style="font-size:9.2px;fill:#101010;font-style:italic;">—12*193</text><text transform="translate(1297.0 471.1) scale(0.76 1)" text-anchor="middle" style="font-size:9.2px;fill:#101010;font-style:italic;">356</text><text transform="translate(1333.5 470.1) scale(0.76 1)" text-anchor="middle" style="font-size:9.2px;fill:#101010;font-style:italic;">6.4</text><text transform="translate(1376.0 470.1) scale(0.76 1)" text-anchor="middle" style="font-size:9.2px;fill:#101010;font-style:italic;">25.6</text><text transform="translate(1461.5 470.1) scale(0.76 1)" text-anchor="middle" style="font-size:9.2px;fill:#101010;font-style:italic;">C255</text><text transform="translate(1155.5 491.3) scale(0.76 1)" text-anchor="middle" style="font-size:9.2px;fill:#101010;font-style:italic;">441</text><text transform="translate(1180.5 491.3) scale(0.76 1)" text-anchor="middle" style="font-size:9.2px;fill:#101010;font-style:italic;">4</text><text transform="translate(1237.5 491.3) scale(0.76 1)" text-anchor="middle" style="font-size:9.2px;fill:#101010;font-style:italic;">—12*194</text><text transform="translate(1297.0 491.3) scale(0.76 1)" text-anchor="middle" style="font-size:9.2px;fill:#101010;font-style:italic;">300</text><text transform="translate(1333.5 490.3) scale(0.76 1)" text-anchor="middle" style="font-size:9.2px;fill:#101010;font-style:italic;">5.4</text><text transform="translate(1376.0 490.3) scale(0.76 1)" text-anchor="middle" style="font-size:9.2px;fill:#101010;font-style:italic;">21.6</text><text transform="translate(1461.5 490.3) scale(0.76 1)" text-anchor="middle" style="font-size:9.2px;fill:#101010;font-style:italic;">C245</text><text transform="translate(1124.0 511.4) scale(0.76 1)" text-anchor="middle" style="font-size:9.2px;fill:#101010;font-style:italic;">K2-34</text><text transform="translate(1155.5 511.4) scale(0.76 1)" text-anchor="middle" style="font-size:9.2px;fill:#101010;font-style:italic;">63</text><text transform="translate(1180.5 511.4) scale(0.76 1)" text-anchor="middle" style="font-size:9.2px;fill:#101010;font-style:italic;">1</text><text transform="translate(1237.5 511.4) scale(0.76 1)" text-anchor="middle" style="font-size:9.2px;fill:#101010;font-style:italic;">I 40 K3</text><text transform="translate(1297.0 511.4) scale(0.76 1)" text-anchor="middle" style="font-size:9.2px;fill:#101010;font-style:italic;">9726</text><text transform="translate(1333.5 510.4) scale(0.76 1)" text-anchor="middle" style="font-size:9.2px;fill:#101010;font-style:italic;">1945.7</text><text transform="translate(1376.0 510.4) scale(0.76 1)" text-anchor="middle" style="font-size:9.2px;fill:#101010;font-style:italic;">1945.7</text><text transform="translate(1461.5 510.4) scale(0.76 1)" text-anchor="middle" style="font-size:9.2px;fill:#101010;font-style:italic;">C255</text><text transform="translate(1155.5 531.6) scale(0.76 1)" text-anchor="middle" style="font-size:9.2px;fill:#101010;font-style:italic;">124</text><text transform="translate(1180.5 531.6) scale(0.76 1)" text-anchor="middle" style="font-size:9.2px;fill:#101010;font-style:italic;">1</text><text transform="translate(1237.5 531.6) scale(0.76 1)" text-anchor="middle" style="font-size:9.2px;fill:#101010;font-style:italic;">—30*900</text><text transform="translate(1297.0 531.6) scale(0.76 1)" text-anchor="middle" style="font-size:9.2px;fill:#101010;font-style:italic;">750</text><text transform="translate(1333.5 530.6) scale(0.76 1)" text-anchor="middle" style="font-size:9.2px;fill:#101010;font-style:italic;">151.0</text><text transform="translate(1376.0 530.6) scale(0.76 1)" text-anchor="middle" style="font-size:9.2px;fill:#101010;font-style:italic;">151.0</text><text transform="translate(1461.5 530.6) scale(0.76 1)" text-anchor="middle" style="font-size:9.2px;fill:#101010;font-style:italic;">C245</text><text transform="translate(1155.5 551.8) scale(0.76 1)" text-anchor="middle" style="font-size:9.2px;fill:#101010;font-style:italic;">126</text><text transform="translate(1180.5 551.8) scale(0.76 1)" text-anchor="middle" style="font-size:9.2px;fill:#101010;font-style:italic;">4</text><text transform="translate(1237.5 551.8) scale(0.76 1)" text-anchor="middle" style="font-size:9.2px;fill:#101010;font-style:italic;">—30*120</text><text transform="translate(1297.0 551.8) scale(0.76 1)" text-anchor="middle" style="font-size:9.2px;fill:#101010;font-style:italic;">120</text><text transform="translate(1333.5 550.8) scale(0.76 1)" text-anchor="middle" style="font-size:9.2px;fill:#101010;font-style:italic;">3.4</text><text transform="translate(1376.0 550.8) scale(0.76 1)" text-anchor="middle" style="font-size:9.2px;fill:#101010;font-style:italic;">13.6</text><text transform="translate(1461.5 550.8) scale(0.76 1)" text-anchor="middle" style="font-size:9.2px;fill:#101010;font-style:italic;">C245</text><text transform="translate(1155.5 571.9) scale(0.76 1)" text-anchor="middle" style="font-size:9.2px;fill:#101010;font-style:italic;">127</text><text transform="translate(1180.5 571.9) scale(0.76 1)" text-anchor="middle" style="font-size:9.2px;fill:#101010;font-style:italic;">1</text><text transform="translate(1237.5 571.9) scale(0.76 1)" text-anchor="middle" style="font-size:9.2px;fill:#101010;font-style:italic;">—30*420</text><text transform="translate(1297.0 571.9) scale(0.76 1)" text-anchor="middle" style="font-size:9.2px;fill:#101010;font-style:italic;">420</text><text transform="translate(1333.5 570.9) scale(0.76 1)" text-anchor="middle" style="font-size:9.2px;fill:#101010;font-style:italic;">41.5</text><text transform="translate(1376.0 570.9) scale(0.76 1)" text-anchor="middle" style="font-size:9.2px;fill:#101010;font-style:italic;">41.5</text><text transform="translate(1461.5 570.9) scale(0.76 1)" text-anchor="middle" style="font-size:9.2px;fill:#101010;font-style:italic;">C255</text><text transform="translate(1155.5 592.1) scale(0.76 1)" text-anchor="middle" style="font-size:9.2px;fill:#101010;font-style:italic;">152</text><text transform="translate(1180.5 592.1) scale(0.76 1)" text-anchor="middle" style="font-size:9.2px;fill:#101010;font-style:italic;">2</text><text transform="translate(1237.5 592.1) scale(0.76 1)" text-anchor="middle" style="font-size:9.2px;fill:#101010;font-style:italic;">—16*220</text><text transform="translate(1297.0 592.1) scale(0.76 1)" text-anchor="middle" style="font-size:9.2px;fill:#101010;font-style:italic;">900</text><text transform="translate(1333.5 591.1) scale(0.76 1)" text-anchor="middle" style="font-size:9.2px;fill:#101010;font-style:italic;">23.5</text><text transform="translate(1376.0 591.1) scale(0.76 1)" text-anchor="middle" style="font-size:9.2px;fill:#101010;font-style:italic;">47.0</text><text transform="translate(1461.5 591.1) scale(0.76 1)" text-anchor="middle" style="font-size:9.2px;fill:#101010;font-style:italic;">C245</text><text transform="translate(1155.5 612.3) scale(0.76 1)" text-anchor="middle" style="font-size:9.2px;fill:#101010;font-style:italic;">212</text><text transform="translate(1180.5 612.3) scale(0.76 1)" text-anchor="middle" style="font-size:9.2px;fill:#101010;font-style:italic;">1</text><text transform="translate(1237.5 612.3) scale(0.76 1)" text-anchor="middle" style="font-size:9.2px;fill:#101010;font-style:italic;">—8*70</text><text transform="translate(1297.0 612.3) scale(0.76 1)" text-anchor="middle" style="font-size:9.2px;fill:#101010;font-style:italic;">188</text><text transform="translate(1333.5 611.3) scale(0.76 1)" text-anchor="middle" style="font-size:9.2px;fill:#101010;font-style:italic;">0.8</text><text transform="translate(1376.0 611.3) scale(0.76 1)" text-anchor="middle" style="font-size:9.2px;fill:#101010;font-style:italic;">0.8</text><text transform="translate(1461.5 611.3) scale(0.76 1)" text-anchor="middle" style="font-size:9.2px;fill:#101010;font-style:italic;">C245</text><text transform="translate(1155.5 632.4) scale(0.76 1)" text-anchor="middle" style="font-size:9.2px;fill:#101010;font-style:italic;">361</text><text transform="translate(1180.5 632.4) scale(0.76 1)" text-anchor="middle" style="font-size:9.2px;fill:#101010;font-style:italic;">2</text><text transform="translate(1237.5 632.4) scale(0.76 1)" text-anchor="middle" style="font-size:9.2px;fill:#101010;font-style:italic;">—12*193</text><text transform="translate(1297.0 632.4) scale(0.76 1)" text-anchor="middle" style="font-size:9.2px;fill:#101010;font-style:italic;">356</text><text transform="translate(1333.5 631.4) scale(0.76 1)" text-anchor="middle" style="font-size:9.2px;fill:#101010;font-style:italic;">6.4</text><text transform="translate(1376.0 631.4) scale(0.76 1)" text-anchor="middle" style="font-size:9.2px;fill:#101010;font-style:italic;">12.8</text><text transform="translate(1461.5 631.4) scale(0.76 1)" text-anchor="middle" style="font-size:9.2px;fill:#101010;font-style:italic;">C255</text><text transform="translate(1155.5 652.6) scale(0.76 1)" text-anchor="middle" style="font-size:9.2px;fill:#101010;font-style:italic;">409</text><text transform="translate(1180.5 652.6) scale(0.76 1)" text-anchor="middle" style="font-size:9.2px;fill:#101010;font-style:italic;">1</text><text transform="translate(1237.5 652.6) scale(0.7 1)" text-anchor="middle" style="font-size:9.2px;fill:#101010;font-style:italic;">BLL50*200*16</text><text transform="translate(1297.0 652.6) scale(0.76 1)" text-anchor="middle" style="font-size:9.2px;fill:#101010;font-style:italic;">150</text><text transform="translate(1333.5 651.6) scale(0.76 1)" text-anchor="middle" style="font-size:9.2px;fill:#101010;font-style:italic;">4.1</text><text transform="translate(1376.0 651.6) scale(0.76 1)" text-anchor="middle" style="font-size:9.2px;fill:#101010;font-style:italic;">4.1</text><text transform="translate(1461.5 651.6) scale(0.76 1)" text-anchor="middle" style="font-size:9.2px;fill:#101010;font-style:italic;">C245</text><text transform="translate(1155.5 672.8) scale(0.76 1)" text-anchor="middle" style="font-size:9.2px;fill:#101010;font-style:italic;">410</text><text transform="translate(1180.5 672.8) scale(0.76 1)" text-anchor="middle" style="font-size:9.2px;fill:#101010;font-style:italic;">2</text><text transform="translate(1237.5 672.8) scale(0.7 1)" text-anchor="middle" style="font-size:9.2px;fill:#101010;font-style:italic;">BLL50*200*16</text><text transform="translate(1297.0 672.8) scale(0.76 1)" text-anchor="middle" style="font-size:9.2px;fill:#101010;font-style:italic;">275</text><text transform="translate(1333.5 671.8) scale(0.76 1)" text-anchor="middle" style="font-size:9.2px;fill:#101010;font-style:italic;">8.1</text><text transform="translate(1376.0 671.8) scale(0.76 1)" text-anchor="middle" style="font-size:9.2px;fill:#101010;font-style:italic;">16.2</text><text transform="translate(1461.5 671.8) scale(0.76 1)" text-anchor="middle" style="font-size:9.2px;fill:#101010;font-style:italic;">C245</text><text transform="translate(1155.5 692.9) scale(0.76 1)" text-anchor="middle" style="font-size:9.2px;fill:#101010;font-style:italic;">420</text><text transform="translate(1180.5 692.9) scale(0.76 1)" text-anchor="middle" style="font-size:9.2px;fill:#101010;font-style:italic;">1</text><text transform="translate(1237.5 692.9) scale(0.76 1)" text-anchor="middle" style="font-size:9.2px;fill:#101010;font-style:italic;">I 20</text><text transform="translate(1297.0 692.9) scale(0.76 1)" text-anchor="middle" style="font-size:9.2px;fill:#101010;font-style:italic;">446</text><text transform="translate(1333.5 691.9) scale(0.76 1)" text-anchor="middle" style="font-size:9.2px;fill:#101010;font-style:italic;">8.2</text><text transform="translate(1376.0 691.9) scale(0.76 1)" text-anchor="middle" style="font-size:9.2px;fill:#101010;font-style:italic;">8.2</text><text transform="translate(1461.5 691.9) scale(0.76 1)" text-anchor="middle" style="font-size:9.2px;fill:#101010;font-style:italic;">C245</text><text transform="translate(1155.5 713.1) scale(0.76 1)" text-anchor="middle" style="font-size:9.2px;fill:#101010;font-style:italic;">441</text><text transform="translate(1180.5 713.1) scale(0.76 1)" text-anchor="middle" style="font-size:9.2px;fill:#101010;font-style:italic;">2</text><text transform="translate(1237.5 713.1) scale(0.76 1)" text-anchor="middle" style="font-size:9.2px;fill:#101010;font-style:italic;">—12*193</text><text transform="translate(1297.0 713.1) scale(0.76 1)" text-anchor="middle" style="font-size:9.2px;fill:#101010;font-style:italic;">300</text><text transform="translate(1333.5 712.1) scale(0.76 1)" text-anchor="middle" style="font-size:9.2px;fill:#101010;font-style:italic;">5.4</text><text transform="translate(1376.0 712.1) scale(0.76 1)" text-anchor="middle" style="font-size:9.2px;fill:#101010;font-style:italic;">10.8</text><text transform="translate(1461.5 712.1) scale(0.76 1)" text-anchor="middle" style="font-size:9.2px;fill:#101010;font-style:italic;">C245</text><text transform="translate(1417.0 735.0) scale(0.76 1)" text-anchor="middle" style="font-size:8.2px;fill:#101010;font-style:italic;">8778.2</text><text transform="translate(1118.0 752.0) scale(0.85 1)" text-anchor="middle" style="font-size:7.6px;fill:#101010;font-style:italic;">Изм.</text><text transform="translate(1143.0 752.0) scale(0.85 1)" text-anchor="middle" style="font-size:7.6px;fill:#101010;font-style:italic;">Кол.уч</text><text transform="translate(1168.0 752.0) scale(0.85 1)" text-anchor="middle" style="font-size:7.6px;fill:#101010;font-style:italic;">Лист</text><text transform="translate(1193.0 752.0) scale(0.85 1)" text-anchor="middle" style="font-size:7.6px;fill:#101010;font-style:italic;">№док</text><text transform="translate(1224.0 752.0) scale(0.85 1)" text-anchor="middle" style="font-size:7.6px;fill:#101010;font-style:italic;">Подп.</text><text transform="translate(1255.0 752.0) scale(0.85 1)" text-anchor="middle" style="font-size:7.6px;fill:#101010;font-style:italic;">Дата</text><text transform="translate(1461.0 763.5) scale(0.85 1)" text-anchor="middle" style="font-size:9px;fill:#101010;font-style:italic;">Стадия</text><text transform="translate(1498.5 763.5) scale(0.85 1)" text-anchor="middle" style="font-size:9px;fill:#101010;font-style:italic;">Лист</text><text transform="translate(1542.0 763.5) scale(0.85 1)" text-anchor="middle" style="font-size:9px;fill:#101010;font-style:italic;">Листов</text><text transform="translate(1460.0 784.0) scale(0.8 1)" text-anchor="middle" style="font-size:13px;fill:#101010;font-style:italic;">Р</text><text transform="translate(1327.0 816.0) scale(0.81 1)" text-anchor="start" style="font-size:17px;fill:#101010;font-style:italic;">0–К2–24</text><text transform="translate(1506.0 711.0) scale(0.72 1)" text-anchor="start" style="font-size:15.5px;fill:#101010;font-style:italic;">0–КМД</text><text transform="translate(1127.5 754.0) scale(0.83 1)" text-anchor="start" style="font-size:11px;fill:#101010;font-style:italic;">Ведомость отправочных элементов</text><text transform="translate(1129.5 779.5) scale(0.8 1)" text-anchor="middle" style="font-size:11px;fill:#101010;font-style:italic;">Марка</text><text transform="translate(1129.5 794.0) scale(0.8 1)" text-anchor="middle" style="font-size:11px;fill:#101010;font-style:italic;">эл-та</text><text transform="translate(1178.0 779.5) scale(0.8 1)" text-anchor="middle" style="font-size:11px;fill:#101010;font-style:italic;">Кол-во,</text><text transform="translate(1178.0 794.0) scale(0.8 1)" text-anchor="middle" style="font-size:11px;fill:#101010;font-style:italic;">шт.</text><text transform="translate(1261.0 775.0) scale(0.8 1)" text-anchor="middle" style="font-size:11px;fill:#101010;font-style:italic;">Масса, кг</text><text transform="translate(1232.0 794.0) scale(0.8 1)" text-anchor="middle" style="font-size:11px;fill:#101010;font-style:italic;">Марки</text><text transform="translate(1288.0 794.0) scale(0.8 1)" text-anchor="middle" style="font-size:11px;fill:#101010;font-style:italic;">Всех</text><text transform="translate(1254.0 797.5) scale(0.8 1)" text-anchor="middle" style="font-size:5.5px;fill:#101010;font-style:italic;">0.0.0.10</text><text transform="translate(1130.0 808.5) scale(0.76 1)" text-anchor="middle" style="font-size:8.6px;fill:#101010;font-style:italic;">K2-6</text><text transform="translate(1180.0 808.5) scale(0.76 1)" text-anchor="middle" style="font-size:8.6px;fill:#101010;font-style:italic;">2</text><text transform="translate(1227.0 808.5) scale(0.76 1)" text-anchor="middle" style="font-size:8.6px;fill:#101010;font-style:italic;">2301.4</text><text transform="translate(1283.0 808.5) scale(0.76 1)" text-anchor="middle" style="font-size:8.6px;fill:#101010;font-style:italic;">4602.8</text><text transform="translate(1130.0 821.0) scale(0.76 1)" text-anchor="middle" style="font-size:8.6px;fill:#101010;font-style:italic;">K2-24</text><text transform="translate(1180.0 821.0) scale(0.76 1)" text-anchor="middle" style="font-size:8.6px;fill:#101010;font-style:italic;">7</text><text transform="translate(1227.0 821.0) scale(0.76 1)" text-anchor="middle" style="font-size:8.6px;fill:#101010;font-style:italic;">4444.8</text><text transform="translate(1283.0 821.0) scale(0.76 1)" text-anchor="middle" style="font-size:8.6px;fill:#101010;font-style:italic;">31113.6</text><text transform="translate(1130.0 833.5) scale(0.76 1)" text-anchor="middle" style="font-size:8.6px;fill:#101010;font-style:italic;">K2-34</text><text transform="translate(1180.0 833.5) scale(0.76 1)" text-anchor="middle" style="font-size:8.6px;fill:#101010;font-style:italic;">1</text><text transform="translate(1227.0 833.5) scale(0.76 1)" text-anchor="middle" style="font-size:8.6px;fill:#101010;font-style:italic;">2252.0</text><text transform="translate(1283.0 833.5) scale(0.76 1)" text-anchor="middle" style="font-size:8.6px;fill:#101010;font-style:italic;">2252.0</text><text transform="translate(1235.0 846.0) scale(0.8 1)" text-anchor="middle" style="font-size:9.5px;fill:#101010;font-style:italic;">Итого:</text><text transform="translate(1285.0 846.0) scale(0.76 1)" text-anchor="middle" style="font-size:8.6px;fill:#101010;font-style:italic;">37968.4</text><text transform="translate(1227.0 863.5) scale(0.84 1)" text-anchor="middle" style="font-size:11.2px;fill:#101010;font-style:italic;">Выборка металла</text><text transform="translate(1186.0 882.5) scale(0.8 1)" text-anchor="middle" style="font-size:10.6px;fill:#101010;font-style:italic;">Профиль</text><text transform="translate(1253.0 877.5) scale(0.8 1)" text-anchor="middle" style="font-size:10.6px;fill:#101010;font-style:italic;">Масса,</text><text transform="translate(1252.0 886.5) scale(0.8 1)" text-anchor="middle" style="font-size:10.6px;fill:#101010;font-style:italic;">кг</text><text transform="translate(1295.5 877.5) scale(0.8 1)" text-anchor="middle" style="font-size:10.6px;fill:#101010;font-style:italic;">Марка</text><text transform="translate(1295.5 886.5) scale(0.8 1)" text-anchor="middle" style="font-size:10.6px;fill:#101010;font-style:italic;">стали</text><text transform="translate(1184.0 898.8) scale(0.74 1)" text-anchor="middle" style="font-size:8.6px;fill:#101010;font-style:italic;">— 8.0 мм</text><text transform="translate(1253.0 898.8) scale(0.74 1)" text-anchor="middle" style="font-size:8.6px;fill:#101010;font-style:italic;">0.8</text><text transform="translate(1295.5 898.8) scale(0.74 1)" text-anchor="middle" style="font-size:8.6px;fill:#101010;font-style:italic;">C245</text><text transform="translate(1184.0 911.3) scale(0.74 1)" text-anchor="middle" style="font-size:8.6px;fill:#101010;font-style:italic;">— 12.0 мм</text><text transform="translate(1253.0 911.3) scale(0.74 1)" text-anchor="middle" style="font-size:8.6px;fill:#101010;font-style:italic;">35.4</text><text transform="translate(1295.5 911.3) scale(0.74 1)" text-anchor="middle" style="font-size:8.6px;fill:#101010;font-style:italic;">C255</text><text transform="translate(1184.0 923.8) scale(0.74 1)" text-anchor="middle" style="font-size:8.6px;fill:#101010;font-style:italic;">— 16.0 мм</text><text transform="translate(1253.0 923.8) scale(0.74 1)" text-anchor="middle" style="font-size:8.6px;fill:#101010;font-style:italic;">70.5</text><text transform="translate(1295.5 923.8) scale(0.74 1)" text-anchor="middle" style="font-size:8.6px;fill:#101010;font-style:italic;">C245</text><text transform="translate(1184.0 936.3) scale(0.74 1)" text-anchor="middle" style="font-size:8.6px;fill:#101010;font-style:italic;">— 20.0 мм</text><text transform="translate(1253.0 936.3) scale(0.74 1)" text-anchor="middle" style="font-size:8.6px;fill:#101010;font-style:italic;">24.6</text><text transform="translate(1295.5 936.3) scale(0.74 1)" text-anchor="middle" style="font-size:8.6px;fill:#101010;font-style:italic;">C255</text><text transform="translate(1184.0 948.8) scale(0.74 1)" text-anchor="middle" style="font-size:8.6px;fill:#101010;font-style:italic;">— 30.0 мм</text><text transform="translate(1253.0 948.8) scale(0.74 1)" text-anchor="middle" style="font-size:8.6px;fill:#101010;font-style:italic;">206.1</text><text transform="translate(1295.5 948.8) scale(0.74 1)" text-anchor="middle" style="font-size:8.6px;fill:#101010;font-style:italic;">C255</text><text transform="translate(1184.0 961.3) scale(0.74 1)" text-anchor="middle" style="font-size:8.6px;fill:#101010;font-style:italic;">BLL50*200*16</text><text transform="translate(1253.0 961.3) scale(0.74 1)" text-anchor="middle" style="font-size:8.6px;fill:#101010;font-style:italic;">8.1</text><text transform="translate(1295.5 961.3) scale(0.74 1)" text-anchor="middle" style="font-size:8.6px;fill:#101010;font-style:italic;">C245</text><text transform="translate(1184.0 973.8) scale(0.74 1)" text-anchor="middle" style="font-size:8.6px;fill:#101010;font-style:italic;">I 40 K3</text><text transform="translate(1253.0 973.8) scale(0.74 1)" text-anchor="middle" style="font-size:8.6px;fill:#101010;font-style:italic;">1945.7</text><text transform="translate(1295.5 973.8) scale(0.74 1)" text-anchor="middle" style="font-size:8.6px;fill:#101010;font-style:italic;">C255</text><text transform="translate(1184.0 986.3) scale(0.74 1)" text-anchor="middle" style="font-size:8.6px;fill:#101010;font-style:italic;">L 100X8</text><text transform="translate(1253.0 986.3) scale(0.74 1)" text-anchor="middle" style="font-size:8.6px;fill:#101010;font-style:italic;">3.1</text><text transform="translate(1295.5 986.3) scale(0.74 1)" text-anchor="middle" style="font-size:8.6px;fill:#101010;font-style:italic;">C245</text><text transform="translate(1253.0 998.8) scale(0.74 1)" text-anchor="middle" style="font-size:8.6px;fill:#101010;font-style:italic;">0.8</text><text transform="translate(1295.5 998.8) scale(0.74 1)" text-anchor="middle" style="font-size:8.6px;fill:#101010;font-style:italic;">C245</text><text x="1240" y="621" textLength="32.5" lengthAdjust="spacingAndGlyphs" xml:space="preserve" style="font-size:6.6px;font-style:italic;fill:#101010">Примечания:</text><text x="1243.5" y="632.5" textLength="232.5" lengthAdjust="spacingAndGlyphs" xml:space="preserve" style="font-size:6.6px;font-style:italic;fill:#101010">1. Предельные отклонения от геометрических размеров в соответствии с СП53-101-98</text><text x="1243" y="641.5" textLength="154" lengthAdjust="spacingAndGlyphs" xml:space="preserve" style="font-size:6.6px;font-style:italic;fill:#101010">по горизонтали             — 0.70      ,   по вертикали        — 0.78</text><text x="1247" y="654.5" textLength="205" lengthAdjust="spacingAndGlyphs" xml:space="preserve" style="font-size:6.6px;font-style:italic;fill:#101010">2. Катеты швов принимать по наименьшей толщине свариваемых элементов.</text><text x="1243" y="664.5" textLength="75" lengthAdjust="spacingAndGlyphs" xml:space="preserve" style="font-size:6.6px;font-style:italic;fill:#101010">2.     – размеры для справок</text><text x="1247" y="675" textLength="254" lengthAdjust="spacingAndGlyphs" xml:space="preserve" style="font-size:6.6px;font-style:italic;fill:#101010">3. В размерах деталей не учтены припуски на механическую обработку  и усадку после сварки</text><text x="1243" y="684" textLength="92" lengthAdjust="spacingAndGlyphs" xml:space="preserve" style="font-size:6.6px;font-style:italic;fill:#101010">4. Контроль швов по СП53-101-98</text></g><g shape-rendering="crispEdges" fill="none" stroke-width="1">
<path stroke="#0000ff" d="M646 646.5H753M660 671.5H773M637 702.5H773M771.5 668V797M601 671.5H641M601.5 664V766M646.5 640V711M682.5 680V706M703.5 660V691M787.5 687V721M601 765.5H729M601 759.5H706M658.5 723V774M728.5 700V777M738.5 720V737M693.5 705V761M658 776.5H729M645.5 726V759M644.5 726V759M682 734.5H701M720 746.5H739M720 669.5H773M720 707.5H773M738.5 720V751M637.5 727V761M601 759.5H691M658.5 725V777M682.5 680V706M703.5 660V691M693.5 703V733"/>
<path stroke="#0000ff" stroke-dasharray="6 4" d="M660 724.5H741"/>
<path stroke="#000" d="M646 616.5H773M646.5 608V657M772.5 608V657M631 631.5H788M620 638.5H661M677 638.5H705M704 634.5H721M601.5 631V709M621.5 630V713M622.5 650V713M646.5 640V701M647.5 640V701M637.5 645V701M654.5 645V681M599 646.5H647M623 649.5H661M637 654.5H721M751 656.5H791M597 671.5H691M773 671.5H813M622 684.5H651M615 687.5H641M773 687.5H813M654 692.5H736M637 702.5H773M597 707.5H641M773 707.5H813M693.5 644V701M758.5 625V656M787.5 647V749M805.5 651V728M660.5 668V706M675.5 690V707M680.5 684V707M735.5 684V707M711.5 690V746M687 668.5H713M688 684.5H713M742 697.5H773M738 704.5H773M648 724.5H788M645 734.5H701M637 742.5H791M675 747.5H713M679 750.5H739M621 759.5H706M621 760.5H661M643 776.5H694M614 786.5H647M598 796.5H647M621.5 750V813M606.5 783V798M628.5 730V761M681.5 715V738M687.5 752V783M693.5 752V783M710.5 752V776M738.5 742V757M650.5 708V736M636.5 726V746M626.5 700V761M651 715.5H687M692 714.5H727M692 726.5H727M697.5 706V733M622 650.5H661M672 668.5H711M615 682.5H643M710 684.5H736M692 727.5H726M677 748.5H713M620 773.5H631M637 656.5H691M660 736.5H701M690 640.5H721M655 697.5H701M700 730.5H741M700 739.5H736M640 755.5H701M650 767.5H691M600 721.5H641M610 729.5H651M605.5 671V708M687.5 655V683M766.5 700V721M664.5 640V701M670.5 700V761M700.5 700V761M717.5 650V701M725.5 690V761M745.5 690V746M752.5 700V746M632.5 700V761M614.5 640V701M695 654.5H729M652 715.5H687M692 725.5H727M675 747.5H701M720 669.5H773M746 699.5H793"/>
<path stroke="#7a3a3a" d="M705 759.5H717M710.5 754V765M673 723.5H679M675.5 721V727"/>
</g>
<g shape-rendering="crispEdges"></g>
<g fill="none" stroke-width="1.05">
<path stroke="#0000ff" d="M601.5 655.5L661.0 655.5L665.5 662.0L661.0 668.5L601.5 668.5M752.0 668.0L773.0 671.5L787.5 687.5M646.5 796.5L771.5 796.5L771.5 786.5L758.0 786.5L752.0 779.0L758.0 772.5L771.5 772.5L771.5 668.0M646.5 796.5L646.5 786.5L660.0 786.5L665.5 779.0L660.0 773.0L658.0 770.0M688.0 759.0L694.0 752.0L710.0 752.0M772.5 669.5L786.8 687.5"/>
<path stroke="#000" d="M644.9 618.1L649.1 613.9M770.9 618.1L775.1 613.9M750.0 669.0L735.0 684.0M735.0 702.0L752.0 690.0M599.9 648.1L604.1 643.9M619.9 640.1L624.1 635.9M635.9 656.1L640.1 651.9M644.9 673.1L649.1 668.9M619.9 673.1L624.1 668.9M599.9 709.1L604.1 704.9M619.9 709.1L624.1 704.9M785.9 673.1L790.1 668.9M803.9 673.1L808.1 668.9M785.9 709.1L790.1 704.9M803.9 689.1L808.1 684.9M756.9 633.1L761.1 628.9M770.9 633.1L775.1 628.9M702.9 640.1L707.1 635.9M644.9 704.1L649.1 699.9M691.9 694.1L696.1 689.9M658.9 694.1L663.1 689.9M648.9 726.1L653.1 721.9M679.9 736.1L684.1 731.9M635.9 744.1L640.1 739.9M785.9 726.1L790.1 721.9M785.9 744.1L790.1 739.9M736.9 752.1L741.1 747.9M619.9 778.1L624.1 773.9M641.9 778.1L646.1 773.9M685.9 778.1L690.1 773.9M691.9 778.1L696.1 773.9M604.9 798.1L609.1 793.9M619.9 788.1L624.1 783.9M619.9 798.1L624.1 793.9M708.9 761.1L713.1 756.9M659.1 651.9L662.9 648.1M686.1 669.9L689.9 666.1M614.1 683.9L617.9 680.1M734.1 685.9L737.9 682.1M691.1 728.9L694.9 725.1M711.1 749.9L714.9 746.1M604.1 672.9L607.9 669.1M604.1 708.9L607.9 705.1M765.1 703.9L768.9 700.1M653.1 655.9L656.9 652.1M674.1 693.9L677.9 690.1M679.1 693.9L682.9 690.1M734.1 693.9L737.9 690.1M710.1 703.9L713.9 700.1M757.1 657.9L760.9 654.1M771.1 657.9L774.9 654.1M625.1 725.9L628.9 722.1M627.1 743.9L630.9 740.1M649.1 735.9L652.9 732.1M692.1 760.9L695.9 757.1M686.1 760.9L689.9 757.1"/>
</g>
<circle cx="690.5" cy="693.5" r="3" fill="#7a3a3a"/>
<circle cx="748.5" cy="664.5" r="3" fill="none" stroke="#ff6a00" stroke-width="1.1"/><path d="M745.0 668.0L752.0 661.0" stroke="#ff6a00" stroke-width="1.1"/>
<circle cx="776.5" cy="694" r="3" fill="none" stroke="#ff6a00" stroke-width="1.1"/><path d="M773.0 697.5L780.0 690.5" stroke="#ff6a00" stroke-width="1.1"/>
<g font-family="Liberation Sans, sans-serif"><text transform="translate(708.0 611.5) scale(0.73 1)" text-anchor="middle" style="font-size:11.6px;fill:#2f9a2f;" stroke="#fefefa" stroke-width="2" paint-order="stroke" stroke-linejoin="round">750</text><text transform="translate(638.0 626.5) scale(0.73 1)" text-anchor="middle" style="font-size:11.6px;fill:#2f9a2f;" stroke="#fefefa" stroke-width="2" paint-order="stroke" stroke-linejoin="round">75</text><text transform="translate(708.0 626.5) scale(0.73 1)" text-anchor="middle" style="font-size:11.6px;fill:#2f9a2f;" stroke="#fefefa" stroke-width="2" paint-order="stroke" stroke-linejoin="round">600</text><text transform="translate(778.5 626.5) scale(0.73 1)" text-anchor="middle" style="font-size:11.6px;fill:#2f9a2f;" stroke="#fefefa" stroke-width="2" paint-order="stroke" stroke-linejoin="round">75</text><text transform="translate(618.5 638.0) rotate(-90) scale(0.73 1)" text-anchor="middle" style="font-size:11.6px;fill:#2f9a2f;" stroke="#fefefa" stroke-width="2" paint-order="stroke" stroke-linejoin="round">50</text><text transform="translate(651.0 643.0) scale(0.73 1)" text-anchor="middle" style="font-size:11.6px;fill:#2f9a2f;" stroke="#fefefa" stroke-width="2" paint-order="stroke" stroke-linejoin="round">100</text><text transform="translate(668.0 647.0) scale(0.73 1)" text-anchor="middle" style="font-size:11.6px;fill:#2f9a2f;" stroke="#fefefa" stroke-width="2" paint-order="stroke" stroke-linejoin="round">194</text><text transform="translate(760.0 649.5) scale(0.73 1)" text-anchor="middle" style="font-size:11.6px;fill:#2f9a2f;" stroke="#fefefa" stroke-width="2" paint-order="stroke" stroke-linejoin="round">100</text><text transform="translate(619.5 661.0) rotate(-90) scale(0.73 1)" text-anchor="middle" style="font-size:11.6px;fill:#2f9a2f;" stroke="#fefefa" stroke-width="2" paint-order="stroke" stroke-linejoin="round">100</text><text transform="translate(678.0 664.5) scale(0.73 1)" text-anchor="middle" style="font-size:11.6px;fill:#2f9a2f;" stroke="#fefefa" stroke-width="2" paint-order="stroke" stroke-linejoin="round">25</text><text transform="translate(803.5 661.0) rotate(-90) scale(0.73 1)" text-anchor="middle" style="font-size:11.6px;fill:#2f9a2f;" stroke="#fefefa" stroke-width="2" paint-order="stroke" stroke-linejoin="round">100</text><text transform="translate(694.5 670.0) scale(0.73 1)" text-anchor="middle" style="font-size:11.6px;fill:#2f9a2f;" stroke="#fefefa" stroke-width="2" paint-order="stroke" stroke-linejoin="round">20</text><text transform="translate(641.5 673.0) rotate(-90) scale(0.73 1)" text-anchor="middle" style="font-size:10.5px;fill:#2f9a2f;" stroke="#fefefa" stroke-width="2" paint-order="stroke" stroke-linejoin="round">420</text><text transform="translate(658.0 674.5) rotate(-90) scale(0.73 1)" text-anchor="middle" style="font-size:10.5px;fill:#2f9a2f;" stroke="#fefefa" stroke-width="2" paint-order="stroke" stroke-linejoin="round">60</text><text transform="translate(603.0 690.0) rotate(-90) scale(0.73 1)" text-anchor="middle" style="font-size:11.6px;fill:#2f9a2f;" stroke="#fefefa" stroke-width="2" paint-order="stroke" stroke-linejoin="round">220</text><text transform="translate(651.0 684.0) scale(0.73 1)" text-anchor="middle" style="font-size:11.6px;fill:#2f9a2f;" stroke="#fefefa" stroke-width="2" paint-order="stroke" stroke-linejoin="round">100</text><text transform="translate(670.0 685.0) scale(0.73 1)" text-anchor="middle" style="font-size:11.6px;fill:#2f9a2f;" stroke="#fefefa" stroke-width="2" paint-order="stroke" stroke-linejoin="round">25</text><text transform="translate(692.0 688.0) scale(0.73 1)" text-anchor="middle" style="font-size:11.6px;fill:#2f9a2f;" stroke="#fefefa" stroke-width="2" paint-order="stroke" stroke-linejoin="round">220</text><text transform="translate(726.0 685.0) scale(0.73 1)" text-anchor="middle" style="font-size:11.6px;fill:#2f9a2f;" stroke="#fefefa" stroke-width="2" paint-order="stroke" stroke-linejoin="round">25</text><text transform="translate(714.0 681.0) rotate(-45) scale(0.73 1)" text-anchor="middle" style="font-size:10px;fill:#2f9a2f;" stroke="#fefefa" stroke-width="2" paint-order="stroke" stroke-linejoin="round">20</text><text transform="translate(751.0 688.0) rotate(-45) scale(0.73 1)" text-anchor="middle" style="font-size:11.6px;fill:#2f9a2f;" stroke="#fefefa" stroke-width="2" paint-order="stroke" stroke-linejoin="round">60</text><text transform="translate(709.0 705.0) rotate(-90) scale(0.73 1)" text-anchor="middle" style="font-size:11.6px;fill:#2f9a2f;" stroke="#fefefa" stroke-width="2" paint-order="stroke" stroke-linejoin="round">25</text><text transform="translate(709.0 714.0) scale(0.73 1)" text-anchor="middle" style="font-size:11.6px;fill:#2f9a2f;" stroke="#fefefa" stroke-width="2" paint-order="stroke" stroke-linejoin="round">60</text><text transform="translate(740.0 717.0) scale(0.73 1)" text-anchor="middle" style="font-size:11.6px;fill:#2f9a2f;" stroke="#fefefa" stroke-width="2" paint-order="stroke" stroke-linejoin="round">550</text><text transform="translate(761.0 713.0) rotate(-90) scale(0.73 1)" text-anchor="middle" style="font-size:11.6px;fill:#2f9a2f;" stroke="#fefefa" stroke-width="2" paint-order="stroke" stroke-linejoin="round">25</text><text transform="translate(803.5 720.0) rotate(-90) scale(0.73 1)" text-anchor="middle" style="font-size:11.6px;fill:#2f9a2f;" stroke="#fefefa" stroke-width="2" paint-order="stroke" stroke-linejoin="round">120</text><text transform="translate(627.0 722.0) rotate(-90) scale(0.73 1)" text-anchor="middle" style="font-size:11.6px;fill:#2f9a2f;" stroke="#fefefa" stroke-width="2" paint-order="stroke" stroke-linejoin="round">300</text><text transform="translate(645.0 720.0) rotate(-90) scale(0.73 1)" text-anchor="middle" style="font-size:11.6px;fill:#2f9a2f;" stroke="#fefefa" stroke-width="2" paint-order="stroke" stroke-linejoin="round">193</text><text transform="translate(603.0 722.0) rotate(-90) scale(0.73 1)" text-anchor="middle" style="font-size:11.6px;fill:#2f9a2f;" stroke="#fefefa" stroke-width="2" paint-order="stroke" stroke-linejoin="round">200</text><text transform="translate(617.0 720.0) rotate(-90) scale(0.73 1)" text-anchor="middle" style="font-size:10px;fill:#2f9a2f;" stroke="#fefefa" stroke-width="2" paint-order="stroke" stroke-linejoin="round">400</text><text transform="translate(637.0 716.0) rotate(-90) scale(0.73 1)" text-anchor="middle" style="font-size:9px;fill:#2f9a2f;" stroke="#fefefa" stroke-width="2" paint-order="stroke" stroke-linejoin="round">400</text><text transform="translate(660.0 721.0) scale(0.73 1)" text-anchor="middle" style="font-size:11.6px;fill:#2f9a2f;" stroke="#fefefa" stroke-width="2" paint-order="stroke" stroke-linejoin="round">200</text><text transform="translate(622.0 745.0) rotate(-90) scale(0.73 1)" text-anchor="middle" style="font-size:11.6px;fill:#2f9a2f;" stroke="#fefefa" stroke-width="2" paint-order="stroke" stroke-linejoin="round">420</text><text transform="translate(641.0 742.0) rotate(-90) scale(0.73 1)" text-anchor="middle" style="font-size:11.6px;fill:#2f9a2f;" stroke="#fefefa" stroke-width="2" paint-order="stroke" stroke-linejoin="round">220</text><text transform="translate(709.0 744.0) scale(0.73 1)" text-anchor="middle" style="font-size:11.6px;fill:#2f9a2f;" stroke="#fefefa" stroke-width="2" paint-order="stroke" stroke-linejoin="round">356</text><text transform="translate(712.0 735.0) scale(0.73 1)" text-anchor="middle" style="font-size:10px;fill:#2f9a2f;" stroke="#fefefa" stroke-width="2" paint-order="stroke" stroke-linejoin="round">900</text><text transform="translate(678.0 771.0) scale(0.73 1)" text-anchor="middle" style="font-size:11.6px;fill:#2f9a2f;" stroke="#fefefa" stroke-width="2" paint-order="stroke" stroke-linejoin="round">25</text><text transform="translate(708.0 768.0) rotate(-90) scale(0.73 1)" text-anchor="middle" style="font-size:11.6px;fill:#2f9a2f;" stroke="#fefefa" stroke-width="2" paint-order="stroke" stroke-linejoin="round">25</text><text transform="translate(641.0 768.0) rotate(-90) scale(0.73 1)" text-anchor="middle" style="font-size:11.6px;fill:#2f9a2f;" stroke="#fefefa" stroke-width="2" paint-order="stroke" stroke-linejoin="round">100</text><text transform="translate(618.0 780.0) rotate(-90) scale(0.73 1)" text-anchor="middle" style="font-size:11.6px;fill:#2f9a2f;" stroke="#fefefa" stroke-width="2" paint-order="stroke" stroke-linejoin="round">80</text><text transform="translate(619.0 805.0) rotate(-90) scale(0.73 1)" text-anchor="middle" style="font-size:11.6px;fill:#2f9a2f;" stroke="#fefefa" stroke-width="2" paint-order="stroke" stroke-linejoin="round">60</text><text transform="translate(696.0 653.0) scale(0.85 1)" text-anchor="start" style="font-size:7.5px;fill:#101010;font-style:italic;" stroke="#fefefa" stroke-width="2" paint-order="stroke" stroke-linejoin="round">Дет.  152</text><text transform="translate(653.0 714.0) scale(0.85 1)" text-anchor="start" style="font-size:7.5px;fill:#101010;font-style:italic;" stroke="#fefefa" stroke-width="2" paint-order="stroke" stroke-linejoin="round">Дет.  441</text><text transform="translate(693.0 723.5) scale(0.85 1)" text-anchor="start" style="font-size:7.5px;fill:#101010;font-style:italic;" stroke="#fefefa" stroke-width="2" paint-order="stroke" stroke-linejoin="round">Дет.  361</text><text transform="translate(676.0 745.0) scale(0.85 1)" text-anchor="start" style="font-size:7.5px;fill:#101010;font-style:italic;" stroke="#fefefa" stroke-width="2" paint-order="stroke" stroke-linejoin="round">Дет.  1</text><text transform="translate(721.0 668.0) scale(0.85 1)" text-anchor="start" style="font-size:7.5px;fill:#101010;font-style:italic;" stroke="#fefefa" stroke-width="2" paint-order="stroke" stroke-linejoin="round">1 отб.</text><text transform="translate(764.0 668.0) scale(0.85 1)" text-anchor="start" style="font-size:7.5px;fill:#101010;font-style:italic;" stroke="#fefefa" stroke-width="2" paint-order="stroke" stroke-linejoin="round">50</text><text transform="translate(747.0 698.0) scale(0.85 1)" text-anchor="start" style="font-size:7.5px;fill:#101010;font-style:italic;" stroke="#fefefa" stroke-width="2" paint-order="stroke" stroke-linejoin="round">4 отб.</text><text transform="translate(783.0 698.0) scale(0.85 1)" text-anchor="start" style="font-size:7.5px;fill:#101010;font-style:italic;" stroke="#fefefa" stroke-width="2" paint-order="stroke" stroke-linejoin="round">23</text><text transform="translate(701.0 668.0) scale(0.85 1)" text-anchor="start" style="font-size:8px;fill:#101010;font-style:italic;" stroke="#fefefa" stroke-width="2" paint-order="stroke" stroke-linejoin="round">26</text></g></svg></div><div class="abs" style="left:0;top:96px;width:1px;height:898px;background:#a0a0a0"></div><div class="abs" style="left:1px;top:96px;width:1px;height:898px;background:#696969"></div><div class="abs" style="left:1918px;top:96px;width:1px;height:898px;background:#e2e2e2"></div><div class="abs" style="left:1919px;top:96px;width:1px;height:898px;background:#fff"></div><div class="abs" style="left:2px;top:993px;width:1917px;height:1px;background:#e4e4e4"></div><div id="title" class="abs"><div class="blob" style="left:476px;top:10px;width:38px;height:14px;background:#d8cc88;opacity:0.8"></div><div class="blob" style="left:716px;top:13px;width:48px;height:10px;background:#c0a8a0;opacity:0.7"></div><div class="blob" style="left:816px;top:8px;width:118px;height:11px;background:#a8acb8;opacity:0.75"></div><div class="blob" style="left:972px;top:8px;width:122px;height:7px;background:#b0a090;opacity:0.7"></div><div class="blob" style="left:972px;top:15px;width:123px;height:6px;background:#e06a20;opacity:0.9"></div><div class="blob" style="left:1136px;top:7px;width:114px;height:11px;background:#c8b850;opacity:0.7"></div><div class="blob" style="left:1150px;top:8px;width:34px;height:8px;background:#50b0d8;opacity:0.9"></div><div class="blob" style="left:1320px;top:14px;width:70px;height:10px;background:#1050c8;opacity:0.9"></div><div class="blob" style="left:1626px;top:5px;width:114px;height:11px;background:#686878;opacity:0.8"></div><div class="blob" style="left:1380px;top:0px;width:200px;height:9px;background:#3a261c;opacity:0.5"></div><div class="blob" style="left:1040px;top:0px;width:120px;height:6px;background:#30221c;opacity:0.5"></div><div class="abs shade"></div><svg class="abs" style="left:0;top:1px" width="20" height="19" viewBox="0 0 20 19"><path d="M0 3L15 0V15L1 17Z" fill="#e0204a"/><path d="M1 17L8 16V19H2Z" fill="#2050c0"/><g fill="none" stroke="#fff" stroke-width="1.3"><path d="M2 5.5l2.5-1.5 2.5 1.5 2.5-1.5 2.5 1.5M3 8.5l2.5 1.5 2.5-1.5 2.5 1.5 2-1.2M2 12.5l2.5-1.5 2.5 1.5 2.5-1.5 2.5 1.5M4.5 4L7 7M9.5 4L7 7M7 7l2.5 3M7 7l-2.5 3"/></g></svg><span id="ttext" class="abs" style="transform:scaleX(0.9461)">Tekla Structures x64 - S:\05. TeklaStructuresModels\Биаксплен 15 - [A&nbsp;&nbsp;&nbsp;[K2.24]]</span><div class="abs" style="left:1813px;top:0;width:105px;height:19px;border:1px solid #c8c8d0;border-top:none;border-radius:0 0 5px 5px;overflow:hidden;box-shadow:0 0 2px #000">
<div class="abs" style="left:0;top:0;width:28px;height:18px;background:linear-gradient(180deg,#a0a0ac 0,#7c7c8a 8px,#3c3c4c 9px,#50505e 18px);border-right:1px solid #c0c0c8"></div>
<div class="abs" style="left:28px;top:0;width:27px;height:18px;background:linear-gradient(180deg,#a0a0ac 0,#7c7c8a 8px,#3c3c4c 9px,#50505e 18px);border-right:1px solid #c0c0c8"></div>
<div class="abs" style="left:55px;top:0;width:49px;height:18px;background:linear-gradient(180deg,#e8a090 0,#d87060 8px,#c03018 9px,#d05030 18px)"></div>
<svg class="abs" style="left:0;top:0" width="104" height="18"><rect x="9" y="9" width="11" height="3.5" fill="#fff" stroke="#444" stroke-width=".6"/><g fill="none" stroke="#444" stroke-width="3.4"><rect x="38" y="7.5" width="7" height="5.5"/><path d="M41 4.5h7v6"/></g><g fill="none" stroke="#fff" stroke-width="2"><rect x="38" y="7.5" width="7" height="5.5"/><path d="M41 4.5h7v6"/></g><g stroke="#444" stroke-width="4.2" stroke-linecap="square"><path d="M75 4l8 7M83 4l-8 7"/></g><g stroke="#fff" stroke-width="2.6" stroke-linecap="square"><path d="M75 4l8 7M83 4l-8 7"/></g></svg></div></div><div id="menu" class="abs"><svg class="abs" style="left:7px;top:1px" width="17" height="17" viewBox="0 0 17 17"><path d="M0 3L16 0V13L1 15Z" fill="#e0204a"/><path d="M1 15L8 14V17H2Z" fill="#2050c0"/><g fill="none" stroke="#fff" stroke-width="1.3"><path d="M2 5l3-1.7 3 1.7 3-1.7 3 1.7M3 8l2.5 1.5L8 8l2.5 1.5L13 8M2 12l3-1.7 3 1.7 3-1.7 3 1.7M5 3.3L8 6.5M11 3.3L8 6.5M8 6.5l2.5 3M8 6.5l-2.5 3"/></g></svg><span class="mi" id="m0" style="left:30px;transform:scaleX(0.9589)">Файл чертежа</span><span class="mi" id="m1" style="left:122px;transform:scaleX(0.9556)">Правка</span><span class="mi" id="m2" style="left:176px;transform:scaleX(0.892)">Вид</span><span class="mi" id="m3" style="left:210px;transform:scaleX(0.9641)">Простановка размеров</span><span class="mi" id="m4" style="left:352px;transform:scaleX(0.9924)">Примечания</span><span class="mi" id="m5" style="left:437px;transform:scaleX(1.0088)">Формы</span><span class="mi" id="m6" style="left:492px;transform:scaleX(0.9836)">Инструменты</span><span class="mi" id="m7" style="left:582px;transform:scaleX(1.0071)">Окно</span><span class="mi" id="m8" style="left:628px;transform:scaleX(0.9463)">Справка</span><div class="abs" style="left:1863px;top:1px;width:18px;height:18px;border:1px solid #b8c4dc;background:linear-gradient(180deg,#f4f8fe,#dce6f6)"></div><div class="abs" style="left:1882px;top:1px;width:18px;height:18px;border:1px solid #b8c4dc;background:linear-gradient(180deg,#f4f8fe,#dce6f6)"></div><div class="abs" style="left:1901px;top:1px;width:18px;height:18px;border:1px solid #b8c4dc;background:linear-gradient(180deg,#f4f8fe,#dce6f6)"></div><svg class="abs" style="left:1863px;top:1px" width="57" height="18"><g stroke="#5a6474" fill="none"><path d="M5 12.5h6" stroke-width="2"/><path d="M24.5 8.5h5v4h-5zM26.5 8v-2.5h5v4h-2" stroke-width="1.3"/><path d="M42 6l6 6M48 6l-6 6" stroke-width="1.8"/></g></svg></div><div id="tb" class="abs"><div class="tbl" style="left:0;top:0;width:634px;height:26px;border-right:1px solid #a8a8a8;border-bottom:1px solid #b0b0b0"></div><div class="tbl" style="left:0;top:26px;width:917px;height:25px;border-right:1px solid #a8a8a8"></div><div class="grip" style="left:3px;top:4px"></div><div class="grip" style="left:3px;top:30px"></div><svg class="abs" style="left:12px;top:6px" width="16" height="16" viewBox="0 0 16 16"><path d="M4.5 3.5h6l3 3v7.5h-9z" fill="#fff" stroke="#3a4a9a"/><path d="M8 11h5.5v3H8z" fill="#2858c8"/><path d="M2 2.5h7M2 4.5h7M2 6.5h7M2 8.5h7M2 10.5h5" stroke="#4a5aa8"/></svg><svg class="abs" style="left:35px;top:6px" width="16" height="16" viewBox="0 0 16 16"><path d="M2 5h12v7H2z" fill="#e8eef8" stroke="#505a90"/><path d="M10 9h4v3h-4z" fill="#2858c8"/><path d="M3 13.5h10M3 15.5h10" stroke="#404a80"/><path d="M7 0l5 5H9v5H5V5H2z" fill="#18a828" stroke="#0a6a14" stroke-width=".6"/></svg><svg class="abs" style="left:58px;top:6px" width="16" height="16" viewBox="0 0 16 16"><path d="M2 6h12v8H2z" fill="#e8eef8" stroke="#505a90"/><path d="M10 11h4v3h-4z" fill="#2858c8"/><path d="M3 1.5h10M3 3.5h10M2 15.5h12" stroke="#404a80"/><path d="M7 14l5-5H9V5H5v4H2z" fill="#18a828" stroke="#0a6a14" stroke-width=".6"/></svg><div class="sep" style="left:80px;top:4px;height:18px"></div><svg class="abs" style="left:88px;top:6px" width="16" height="16" viewBox="0 0 16 16"><path d="M2 4h9l3 3v7H2z" fill="#f0f4fc" stroke="#3a4a9a"/><path d="M4 2h6v5H4z" fill="#4060c8"/><path d="M9 10h5v4H9z" fill="#2858c8"/><path d="M5 3h2v3H5z" fill="#fff"/></svg><div class="sep" style="left:110px;top:4px;height:18px"></div><svg class="abs" style="left:119px;top:6px" width="16" height="16" viewBox="0 0 16 16"><path d="M2 2v6h6L6 6c3-2 6 0 5 3s-3 4-5 5c4 0 8-3 8-7S9 1 4 4z" fill="#2060d0" stroke="#1040a0" stroke-width=".5"/></svg><svg class="abs" style="left:143px;top:6px" width="16" height="16" viewBox="0 0 16 16"><path d="M14 2v6H8l2-2c-3-2-6 0-5 3s3 4 5 5c-4 0-8-3-8-7s5-6 10-3z" fill="#2060d0" stroke="#1040a0" stroke-width=".5"/></svg><div class="sep" style="left:164px;top:4px;height:18px"></div><svg class="abs" style="left:173px;top:6px" width="16" height="16" viewBox="0 0 16 16"><path d="M4 2h10c-2 3-1 8-2 12H3c2-3 1-8 2-10H2c0-1 1-2 2-2z" fill="#fff" stroke="#505050"/><path d="M3 13c-2 0-2 2 0 2h7c2 0 2-1 2-2" fill="#e8e8f0" stroke="#505050"/><path d="M6 2h7" stroke="#40a040"/></svg><div class="sep" style="left:195px;top:4px;height:18px"></div><svg class="abs" style="left:204px;top:6px" width="16" height="16" viewBox="0 0 16 16"><rect x="1.5" y="2.5" width="12" height="9" rx="1" fill="#f4f8ff" stroke="#2050c8" stroke-width="1.2"/><g transform="translate(5 3) scale(1.0)"><path d="M4 0l4 2.5v6L4 11 0 8.5v-6z" fill="#3890f0"/><path d="M4 0l4 2.5L4 5 0 2.5z" fill="#d8ecff"/><path d="M4 5l4-2.5v6L4 11z" fill="#1050b8"/></g></svg><svg class="abs" style="left:227px;top:6px" width="16" height="16" viewBox="0 0 16 16"><rect x="1.5" y="2.5" width="12" height="9" rx="1" fill="#f4f8ff" stroke="#2050c8" stroke-width="1.2"/><g transform="translate(5 3) scale(1.0)"><path d="M4 0l4 2.5v6L4 11 0 8.5v-6z" fill="#f0c020"/><path d="M4 0l4 2.5L4 5 0 2.5z" fill="#fff0a0"/><path d="M4 5l4-2.5v6L4 11z" fill="#c08000"/></g></svg><svg class="abs" style="left:250px;top:6px" width="16" height="16" viewBox="0 0 16 16"><rect x="1.5" y="2.5" width="12" height="9" rx="1" fill="#f4f8ff" stroke="#2050c8" stroke-width="1.2"/><rect x="5" y="8" width="3" height="2.5" fill="#e8c800"/><rect x="10" y="8" width="3" height="2.5" fill="#2040c0"/><rect x="5" y="11.5" width="3" height="2.5" fill="#20a020"/><rect x="10" y="11.5" width="3" height="2.5" fill="#e02040"/></svg><svg class="abs" style="left:273px;top:6px" width="16" height="16" viewBox="0 0 16 16"><rect x="1.5" y="2.5" width="12" height="9" rx="1" fill="#f4f8ff" stroke="#2050c8" stroke-width="1.2"/><path d="M5 5h5v0M10 5l-2-1.5M10 5l-2 1.5M10 9H5M5 9l2-1.5M5 9l2 1.5M5 5v4M10 5" stroke="#8b008b" fill="none"/></svg><svg class="abs" style="left:296px;top:6px" width="16" height="16" viewBox="0 0 16 16"><rect x="1.5" y="2.5" width="12" height="9" rx="1" fill="#f4f8ff" stroke="#2050c8" stroke-width="1.2"/><path d="M4 4.5l7 5M4 4.5h2.5M4 4.5v2.2M11 9.5H8.5M11 9.5V7.3" stroke="#8b008b" fill="none" stroke-width="1.2"/></svg><svg class="abs" style="left:319px;top:6px" width="16" height="16" viewBox="0 0 16 16"><rect x="1.5" y="1.5" width="11" height="8" rx="1" fill="#f4f8ff" stroke="#2050c8" stroke-width="1.2"/><circle cx="10" cy="11" r="4.6" fill="#18a060" stroke="#e01010" stroke-width="1.4"/><path d="M8.5 7v8M11.5 7v8M6 9.5h8M6 12.5h8" stroke="#fff" stroke-width="1"/></svg><svg class="abs" style="left:342px;top:6px" width="16" height="16" viewBox="0 0 16 16"><path d="M4 8h8l3 3v4H4z" fill="#fff" stroke="#3a3a8a"/><path d="M11 12h4v3h-4z" fill="#2858c8"/><rect x="1" y="1" width="2.5" height="2.5" fill="#e8c800"/><rect x="4.5" y="1" width="2.5" height="2.5" fill="#2040c0"/><rect x="1" y="4.5" width="2.5" height="2.5" fill="#20a020"/><rect x="4.5" y="4.5" width="2.5" height="2.5" fill="#e02040"/><path d="M9 3v7M9 11l-3-3.5h6z" stroke="#18a028" fill="#18a028" stroke-width="1.5"/></svg><div class="sep" style="left:364px;top:4px;height:18px"></div><svg class="abs" style="left:373px;top:6px" width="16" height="16" viewBox="0 0 16 16"><rect x="2" y="2" width="7" height="7" fill="#30b040" stroke="#505060"/><rect x="6" y="7" width="7" height="7" fill="#30b040" stroke="#306038"/><path d="M10 1l4 4M14 5V2M14 5h-3" stroke="#2070d0" fill="none" stroke-width="1.3"/></svg><svg class="abs" style="left:397px;top:6px" width="16" height="16" viewBox="0 0 16 16"><rect x="2" y="2" width="7" height="7" fill="#c8c8d0" stroke="#505060"/><rect x="6" y="7" width="7" height="7" fill="#30b040" stroke="#306038"/><path d="M10 1l4 4M14 5V2M14 5h-3" stroke="#2070d0" fill="none" stroke-width="1.3"/></svg><div class="sep" style="left:418px;top:4px;height:18px"></div><svg class="abs" style="left:428px;top:6px" width="16" height="16" viewBox="0 0 16 16"><path d="M2 14l5-5" stroke="#d89030" stroke-width="2.6" stroke-linecap="round"/><circle cx="10" cy="6" r="4.6" fill="#e8f4ff" stroke="#8898c8" stroke-width="1.2"/><path d="M7.5 6h5M10 3.5v5" stroke="#109020" stroke-width="1.5"/></svg><svg class="abs" style="left:451px;top:6px" width="16" height="16" viewBox="0 0 16 16"><path d="M2 14l5-5" stroke="#d89030" stroke-width="2.6" stroke-linecap="round"/><circle cx="10" cy="6" r="4.6" fill="#e8f4ff" stroke="#8898c8" stroke-width="1.2"/><path d="M7.5 6h5" stroke="#e01010" stroke-width="1.5"/></svg><svg class="abs" style="left:474px;top:6px" width="16" height="16" viewBox="0 0 16 16"><path d="M2 14l5-5" stroke="#d89030" stroke-width="2.6" stroke-linecap="round"/><circle cx="10" cy="6" r="4.6" fill="#e8f4ff" stroke="#8898c8" stroke-width="1.2"/><path d="M3 1L1 2.5 3 4M6 1L4 2.5 6 4" stroke="#e01010" fill="none" stroke-width="1.2"/></svg><div class="sep" style="left:495px;top:4px;height:18px"></div><svg class="abs" style="left:504px;top:6px" width="16" height="16" viewBox="0 0 16 16"><text x="0" y="9" font-size="11" font-weight="bold" fill="#1838a0" font-family="Liberation Sans">?</text><g transform="translate(7 4) scale(1.05)"><path d="M4 0l4 2.5v6L4 11 0 8.5v-6z" fill="#2880e8"/><path d="M4 0l4 2.5L4 5 0 2.5z" fill="#c8e4ff"/><path d="M4 5l4-2.5v6L4 11z" fill="#1048b0"/></g></svg><svg class="abs" style="left:528px;top:6px" width="16" height="16" viewBox="0 0 16 16"><path d="M1 5h5l1 2h6v7H1z" fill="#f8d870" stroke="#c8a030" stroke-width=".7"/><path d="M6 3c3-3 7-1 7 3M13 7l-2.5-2M13 7l2-2.5" stroke="#20a020" fill="none" stroke-width="1.4"/><g transform="translate(9 8) scale(0.75)"><path d="M4 0l4 2.5v6L4 11 0 8.5v-6z" fill="#2880e8"/><path d="M4 0l4 2.5L4 5 0 2.5z" fill="#c8e4ff"/><path d="M4 5l4-2.5v6L4 11z" fill="#1048b0"/></g></svg><svg class="abs" style="left:551px;top:6px" width="16" height="16" viewBox="0 0 16 16"><rect x="1.5" y="4.5" width="11" height="9" fill="#f4f8ff" stroke="#2050c8" stroke-width="1.3"/><path d="M7 2.5h8M7 4.5h8M7 6.5h8M7 8.5h8M7 10.5h8" stroke="#109020" stroke-width="1.1"/></svg><div class="sep" style="left:572px;top:4px;height:18px"></div><svg class="abs" style="left:581px;top:6px" width="16" height="16" viewBox="0 0 16 16"><path d="M0 3l4 5-4 5h3.5l4-5-4-5zM5 3l4 5-4 5h3.5l4-5-4-5zM10 3l4 5-4 5h2l4-5-4-5z" fill="#38bcd8"/></svg><div class="sep" style="left:603px;top:4px;height:18px"></div><svg class="abs" style="left:612px;top:6px" width="16" height="16" viewBox="0 0 16 16"><rect x="2" y="1" width="13" height="7" rx="1" fill="#4858b8" stroke="#283078"/><rect x="4" y="3" width="2.5" height="2.5" fill="#a8b4f0"/><rect x="7.5" y="3" width="2.5" height="2.5" fill="#a8b4f0"/><rect x="11" y="3" width="2.5" height="2.5" fill="#a8b4f0"/><path d="M1 3l4 4" stroke="#e8c020" stroke-width="2"/><path d="M4 7c0 4 3 7 7 7 2 0 3-1 4-3-3 1-5 0-7-4z" fill="#d81810"/></svg><svg class="abs" style="left:11px;top:31px" width="16" height="16" viewBox="0 0 16 16"><path d="M1 4.5h13M3.5 2v12M11.5 2v12" stroke="#8b008b" stroke-width="1.0" fill="none"/></svg><svg class="abs" style="left:34px;top:31px" width="16" height="16" viewBox="0 0 16 16"><path d="M4.5 2v12M2 4.5h10M2 12.5h10" stroke="#8b008b" stroke-width="1.0" fill="none"/></svg><svg class="abs" style="left:58px;top:31px" width="16" height="16" viewBox="0 0 16 16"><path d="M1 4.5h11M3.5 1v10M9.5 1v10" stroke="#8b008b" stroke-width="1.0" fill="none"/><path d="M2 10.5h8M2 14.5h9" stroke="#1a3fc0" stroke-width="1" fill="none" stroke-dasharray="1.2 1.2"/><path d="M14 6v8M14 14l-1.5-2M14 14l1.5-2M14 6l-1.5 2M14 6l1.5 2" stroke="#1a3fc0" stroke-width="1" fill="none"/></svg><svg class="abs" style="left:80px;top:31px" width="16" height="16" viewBox="0 0 16 16"><path d="M1 13l10-10M2 10l4 4M9 2l4 4" stroke="#8b008b" stroke-width="1.1" fill="none"/></svg><svg class="abs" style="left:104px;top:31px" width="16" height="16" viewBox="0 0 16 16"><path d="M1 4.5h13M3.5 2v11M11.5 2v11" stroke="#8b008b" stroke-width="1.0" fill="none"/><rect x="4.5" y="9.5" width="2" height="2" fill="none" stroke="#e01010" stroke-width="1"/><rect x="8.5" y="9.5" width="2" height="2" fill="none" stroke="#e01010" stroke-width="1"/></svg><svg class="abs" style="left:127px;top:31px" width="16" height="16" viewBox="0 0 16 16"><path d="M1 4.5h13M4.5 2v11M10.5 2v11" stroke="#8b008b" stroke-width="1.0" fill="none"/><path d="M1 13.5h14M8.5 13v-3h2" stroke="#1a3fc0" stroke-width="1" fill="none"/></svg><svg class="abs" style="left:150px;top:31px" width="16" height="16" viewBox="0 0 16 16"><path d="M3.5 14C3.5 8 7 4 13 3M1 13.5h5M13.5 2v10" stroke="#8b008b" stroke-width="1.0" fill="none"/></svg><svg class="abs" style="left:173px;top:31px" width="16" height="16" viewBox="0 0 16 16"><path d="M3 3l10 10M3 3h3M3 3v3M13 13h-3M13 13v-3M1 6l4-4" stroke="#8b008b" stroke-width="1.1" fill="none"/></svg><svg class="abs" style="left:196px;top:31px" width="16" height="16" viewBox="0 0 16 16"><path d="M2 13h11L9 7z" fill="#f0a020" stroke="#a06010" stroke-width=".5"/><path d="M1 13h14M2 13L12 2" stroke="#404040" stroke-width="1.3" fill="none"/></svg><svg class="abs" style="left:219px;top:31px" width="16" height="16" viewBox="0 0 16 16"><path d="M1 4.5h13M1 10.5h8M4.5 1v13M10.5 1v8" stroke="#8b008b" stroke-width="1.0" fill="none"/><circle cx="11.5" cy="11.5" r="3.5" fill="#fff" stroke="#405080" stroke-width="1.2"/><path d="M11.5 11.5V8a3.5 3.5 0 0 1 3.5 3.5zM11.5 11.5V15A3.5 3.5 0 0 1 8 11.5z" fill="#2050c0"/></svg><div class="sep" style="left:240px;top:30px;height:18px"></div><svg class="abs" style="left:250px;top:31px" width="16" height="16" viewBox="0 0 16 16"><path d="M1 4.5h13M3.5 1v13M7.5 1v13M11.5 1v13" stroke="#8b008b" stroke-width="1.0" fill="none"/><circle cx="6" cy="3.5" r="1.8" fill="#fff" stroke="#e01010" stroke-width="1.2"/></svg><svg class="abs" style="left:273px;top:31px" width="16" height="16" viewBox="0 0 16 16"><path d="M1 4.5h12M3.5 1v13M7.5 1v11M10.5 1v8" stroke="#8b008b" stroke-width="1.0" fill="none"/><path d="M9 10l6 5M15 10l-6 5" stroke="#e83010" stroke-width="1.1" fill="none"/></svg><svg class="abs" style="left:296px;top:31px" width="16" height="16" viewBox="0 0 16 16"><path d="M1 4.5h13M3.5 1v13M7.5 1v13M11.5 1v13" stroke="#8b008b" stroke-width="1.0" fill="none"/><path d="M3 6l4 2.5L3 11z" fill="#e83010"/></svg><svg class="abs" style="left:319px;top:31px" width="16" height="16" viewBox="0 0 16 16"><path d="M1 3.5h8M3.5 1v5M6.5 1v5M8 7.5h6M10.5 3v11M8 11.5h6" stroke="#8b008b" stroke-width="1.0" fill="none"/></svg><svg class="abs" style="left:342px;top:31px" width="16" height="16" viewBox="0 0 16 16"><path d="M1 3.5h7M3.5 1v5M6.5 1v5M9 9.5h6M11.5 7v8M9 12.5h6" stroke="#8b008b" stroke-width="1.0" fill="none"/><path d="M9 1l5 5M14 1l-5 5" stroke="#e83010" stroke-width="1.1" fill="none"/></svg><div class="sep" style="left:363px;top:30px;height:18px"></div><svg class="abs" style="left:372px;top:31px" width="16" height="16" viewBox="0 0 16 16"><rect x="1" y="1" width="14" height="13" fill="none" stroke="#1a4fd0" stroke-width="1.4" stroke-dasharray="3 1.5"/><rect x="6" y="3" width="6" height="6" fill="#a8b8f0" stroke="#6070c0" stroke-width=".6"/><path d="M3 11h10M6 11l-2 3" stroke="#4060c0" fill="none"/></svg><div class="sep" style="left:394px;top:30px;height:18px"></div><svg class="abs" style="left:403px;top:31px" width="16" height="16" viewBox="0 0 16 16"><text x="2" y="9" font-size="12" font-family="Liberation Sans" fill="#1a3fc0">a</text><path d="M1 12h14M8 12l-5 3" stroke="#1a3fc0" fill="none" stroke-width="1.1"/></svg><svg class="abs" style="left:427px;top:31px" width="16" height="16" viewBox="0 0 16 16"><text x="2" y="9" font-size="12" font-family="Liberation Sans" fill="#1a3fc0">a</text><path d="M2 13h13" stroke="#1a3fc0" stroke-dasharray="1 1" stroke-width="1.4"/></svg><svg class="abs" style="left:449px;top:31px" width="16" height="16" viewBox="0 0 16 16"><g transform="rotate(45 5 6)"><rect x="0.5" y="3.5" width="9" height="4.5" fill="none" stroke="#1a2f9f" stroke-width="1.3"/><path d="M3 5.7h3" stroke="#1a2f9f" stroke-width=".9"/></g><path d="M4.5 15.5L15 5" stroke="#1a2f9f" stroke-dasharray="1.3 1.3" stroke-width="1.3"/></svg><svg class="abs" style="left:472px;top:31px" width="16" height="16" viewBox="0 0 16 16"><g transform="rotate(45 5 6)"><rect x="0.5" y="3.5" width="9" height="4.5" fill="none" stroke="#1a2f9f" stroke-width="1.3"/><path d="M3 5.7h3" stroke="#1a2f9f" stroke-width=".9"/></g><path d="M4.5 15.5L15 5" stroke="#1a2f9f" stroke-dasharray="1.3 1.3" stroke-width="1.3"/><path d="M3.5 11v4h4" stroke="#1a2f9f" fill="none" stroke-width="1.3"/></svg><div class="sep" style="left:494px;top:30px;height:18px"></div><svg class="abs" style="left:503px;top:31px" width="16" height="16" viewBox="0 0 16 16"><text x="2" y="9" font-size="12" font-family="Liberation Sans" fill="#a0104a">a</text><path d="M1 12h14M8 12l-5 3" stroke="#a0104a" fill="none" stroke-width="1.1"/></svg><svg class="abs" style="left:527px;top:31px" width="16" height="16" viewBox="0 0 16 16"><text x="2" y="9" font-size="12" font-family="Liberation Sans" fill="#a0104a">a</text><path d="M2 13h13" stroke="#a0104a" stroke-dasharray="1 1" stroke-width="1.4"/></svg><svg class="abs" style="left:549px;top:31px" width="16" height="16" viewBox="0 0 16 16"><g transform="rotate(45 5 6)"><rect x="0.5" y="3.5" width="9" height="4.5" fill="none" stroke="#a0104a" stroke-width="1.3"/><path d="M3 5.7h3" stroke="#a0104a" stroke-width=".9"/></g><path d="M4.5 15.5L15 5" stroke="#a0104a" stroke-dasharray="1.3 1.3" stroke-width="1.3"/></svg><div class="sep" style="left:571px;top:30px;height:18px"></div><svg class="abs" style="left:581px;top:31px" width="16" height="16" viewBox="0 0 16 16"><rect x="2.8" y="3.8" width="7.4" height="6.4" fill="none" stroke="#1a2f9f" stroke-width="1.5"/><rect x="5.5" y="6" width="2" height="2" fill="#1a2f9f"/><path d="M2 14h13" stroke="#1a2f9f" stroke-dasharray="1 1" stroke-width="1.4"/></svg><svg class="abs" style="left:604px;top:31px" width="16" height="16" viewBox="0 0 16 16"><path d="M3 14V8h9M3 14l-2-2.5M3 14l2-2.5M9 3h5M11.5 .5v5" stroke="#1a3fc0" stroke-width="1.4" fill="none"/></svg><svg class="abs" style="left:627px;top:31px" width="16" height="16" viewBox="0 0 16 16"><path d="M9 2H3v7M3 11L1 8h4z" stroke="#8b008b" stroke-width="1.2" fill="none"/><path d="M8 1h4v10l-2 3-2-3z" fill="#a06818"/><ellipse cx="10" cy="14" rx="4" ry="2" fill="#fff"/></svg><div class="sep" style="left:648px;top:30px;height:18px"></div><svg class="abs" style="left:658px;top:31px" width="16" height="16" viewBox="0 0 16 16"><path d="M2 13L13 3" stroke="#18a018" stroke-width="1.3" fill="none"/></svg><svg class="abs" style="left:681px;top:31px" width="16" height="16" viewBox="0 0 16 16"><path d="M3.5 4.5h9v8h-9z" stroke="#18a018" stroke-width="1.3" fill="none"/></svg><svg class="abs" style="left:704px;top:31px" width="16" height="16" viewBox="0 0 16 16"><circle cx="8" cy="8.5" r="5.3" fill="none" stroke="#18a018" stroke-width="1.4"/></svg><svg class="abs" style="left:726px;top:31px" width="16" height="16" viewBox="0 0 16 16"><path d="M4 15C5 9 8 5 15 4" stroke="#18a018" stroke-width="2" fill="none"/><rect x="1" y="1" width="2.5" height="2.5" fill="#107010"/><rect x="6" y="1" width="2.5" height="2.5" fill="#107010"/><rect x="1" y="6" width="2.5" height="2.5" fill="#107010"/></svg><svg class="abs" style="left:750px;top:31px" width="16" height="16" viewBox="0 0 16 16"><path d="M4 4.5h7v5H8.5v3H5" stroke="#18a018" stroke-width="1.3" fill="none"/></svg><svg class="abs" style="left:773px;top:31px" width="16" height="16" viewBox="0 0 16 16"><path d="M4.5 4.5h7v5H9.5v3h-5z" stroke="#18a018" stroke-width="1.3" fill="none"/></svg><svg class="abs" style="left:794px;top:31px" width="16" height="16" viewBox="0 0 16 16"><path d="M2 3h10v8l-3 2-3-1-3 2z" fill="#e4e8e4"/><path d="M1 13c2-3 4 1 6-1s3-3 5-1c1-2-1-3 1-5s-1-3 0-5" stroke="#18a018" stroke-width="1.5" fill="none"/></svg><div class="sep" style="left:817px;top:30px;height:18px"></div><svg class="abs" style="left:826px;top:31px" width="16" height="16" viewBox="0 0 16 16"><rect x="8" y="9" width="8" height="7" fill="#fff8b0"/><path d="M3 5v10M8 5v10M13 5v5" stroke="#8b008b" stroke-width="1.1" fill="none"/><circle cx="3" cy="3" r="2" fill="none" stroke="#e83010" stroke-width="1.2"/><circle cx="8" cy="3" r="2" fill="none" stroke="#e83010" stroke-width="1.2"/><circle cx="13" cy="3" r="2" fill="none" stroke="#e83010" stroke-width="1.2"/><path d="M10 10l5 5M15 10l-5 5" stroke="#e83010" stroke-width="1.2" fill="none"/></svg><svg class="abs" style="left:849px;top:31px" width="16" height="16" viewBox="0 0 16 16"><rect x="8" y="9" width="8" height="7" fill="#fff8b0"/><circle cx="7" cy="7" r="6" fill="none" stroke="#a030a0" stroke-width="1"/><circle cx="8" cy="6" r="5.5" fill="none" stroke="#a030a0" stroke-width=".8"/><path d="M3 5h9M5 3v9M10 3v6" stroke="#8b008b" stroke-width="1" fill="none"/><path d="M10 10l5 5M15 10l-5 5" stroke="#e83010" stroke-width="1.2" fill="none"/></svg><svg class="abs" style="left:872px;top:31px" width="16" height="16" viewBox="0 0 16 16"><rect x="8" y="9" width="8" height="7" fill="#fff8b0"/><circle cx="7" cy="7" r="6" fill="none" stroke="#a030a0" stroke-width="1"/><circle cx="8" cy="6" r="5.5" fill="none" stroke="#a030a0" stroke-width=".8"/><rect x="4" y="4" width="5" height="6" fill="#a8c0f0" stroke="#6080d0" stroke-width=".6"/><path d="M10 10l5 5M15 10l-5 5" stroke="#e83010" stroke-width="1.2" fill="none"/></svg><svg class="abs" style="left:895px;top:31px" width="16" height="16" viewBox="0 0 16 16"><rect x="8" y="9" width="8" height="7" fill="#fff8b0"/><circle cx="7" cy="7" r="6" fill="none" stroke="#a030a0" stroke-width="1"/><circle cx="8" cy="6" r="5.5" fill="none" stroke="#a030a0" stroke-width=".8"/><text x="4" y="10" font-size="9" font-family="Liberation Sans" fill="#a0104a">a</text><path d="M10 10l5 5M15 10l-5 5" stroke="#e83010" stroke-width="1.2" fill="none"/></svg></div><div id="btb" class="abs"><div class="tbl" style="left:0;top:0;width:826px;height:25px;border-right:1px solid #b0b0b0"></div><div class="grip" style="left:3px;top:5px"></div><div class="grip" style="left:335px;top:5px"></div><div class="pb" style="left:8px"></div><svg class="abs" style="left:12px;top:5px" width="16" height="16" viewBox="0 0 16 16"><rect x="1.5" y="1.5" width="14" height="13" fill="none" stroke="#1858d0" stroke-width="1.3" stroke-dasharray="2.5 1.5"/><path d="M5 2l7 8H8l2 4-2 1-2-4-1 3z" fill="#1848c8" stroke="#0a2a80" stroke-width=".5"/></svg><div class="pb" style="left:31px"></div><svg class="abs" style="left:35px;top:5px" width="16" height="16" viewBox="0 0 16 16"><rect x="1.5" y="1.5" width="14" height="13" fill="none" stroke="#1858d0" stroke-width="1.3" stroke-dasharray="2.5 1.5"/><path d="M2 13C4 7 8 4 14 3M4 14c2-5 5-7 10-8" stroke="#2060d0" stroke-width="1.2" fill="none"/></svg><div class="pb" style="left:54px"></div><svg class="abs" style="left:58px;top:5px" width="16" height="16" viewBox="0 0 16 16"><rect x="1.5" y="1.5" width="14" height="13" fill="none" stroke="#1858d0" stroke-width="1.3" stroke-dasharray="2.5 1.5"/><text x="5" y="12" font-size="12" font-family="Liberation Sans" fill="#1838a0">a</text></svg><div class="pb" style="left:77px"></div><svg class="abs" style="left:81px;top:5px" width="16" height="16" viewBox="0 0 16 16"><rect x="1.5" y="1.5" width="14" height="13" fill="none" stroke="#1858d0" stroke-width="1.3" stroke-dasharray="2.5 1.5"/><path d="M2 11l4-4h8" stroke="#2060d0" stroke-width="1.3" fill="none"/></svg><div class="pb" style="left:100px"></div><svg class="abs" style="left:104px;top:5px" width="16" height="16" viewBox="0 0 16 16"><rect x="1.5" y="1.5" width="14" height="13" fill="none" stroke="#1858d0" stroke-width="1.3" stroke-dasharray="2.5 1.5"/><rect x="6" y="5" width="5" height="5" fill="#a0b0f0" stroke="#6878d0" stroke-width=".7"/></svg><div class="pb" style="left:123px"></div><svg class="abs" style="left:127px;top:5px" width="16" height="16" viewBox="0 0 16 16"><rect x="1.5" y="1.5" width="14" height="13" fill="none" stroke="#1858d0" stroke-width="1.3" stroke-dasharray="2.5 1.5"/><path d="M10 4H5v8h5M10 4l-2-1.5M10 12l-2 1.5" stroke="#2060d0" stroke-width="1.4" fill="none"/></svg><div class="pb" style="left:146px"></div><svg class="abs" style="left:150px;top:5px" width="16" height="16" viewBox="0 0 16 16"><rect x="1.5" y="1.5" width="14" height="13" fill="none" stroke="#1858d0" stroke-width="1.3" stroke-dasharray="2.5 1.5"/><path d="M7 1h3v9l-1.5 3L7 10z" fill="#a06818"/><ellipse cx="8.5" cy="14" rx="4" ry="2" fill="#fff"/></svg><div class="pb" style="left:169px"></div><svg class="abs" style="left:173px;top:5px" width="16" height="16" viewBox="0 0 16 16"><rect x="1.5" y="1.5" width="14" height="13" fill="none" stroke="#1858d0" stroke-width="1.3" stroke-dasharray="2.5 1.5"/><rect x="3.5" y="4" width="10" height="8" fill="#f4f8ff" stroke="#4070d8" stroke-width="1.2"/></svg><div class="pb" style="left:192px"></div><svg class="abs" style="left:196px;top:5px" width="16" height="16" viewBox="0 0 16 16"><rect x="1.5" y="1.5" width="14" height="13" fill="none" stroke="#1858d0" stroke-width="1.3" stroke-dasharray="2.5 1.5"/><path d="M3 4h11M5 2v12M8.5 2v12M12 2v12" stroke="#8b008b" stroke-width="1.1" fill="none"/></svg><svg class="abs" style="left:219px;top:5px" width="16" height="16" viewBox="0 0 16 16"><rect x="1.5" y="1.5" width="14" height="13" fill="none" stroke="#1858d0" stroke-width="1.3" stroke-dasharray="2.5 1.5"/><path d="M3 4h11M5 2v11M12 2v11" stroke="#8b008b" stroke-width="1.2" fill="none"/></svg><div class="pb" style="left:238px"></div><svg class="abs" style="left:242px;top:5px" width="16" height="16" viewBox="0 0 16 16"><rect x="1.5" y="1.5" width="14" height="13" fill="none" stroke="#1858d0" stroke-width="1.3" stroke-dasharray="2.5 1.5"/><path d="M2 13L14 3M3 4l11 9M8 2v12M2 8h13" stroke="#e04010" stroke-width="1.3" fill="none"/></svg><svg class="abs" style="left:265px;top:5px" width="16" height="16" viewBox="0 0 16 16"><rect x="1.5" y="1.5" width="14" height="13" fill="none" stroke="#1858d0" stroke-width="1.3" stroke-dasharray="2.5 1.5"/><path d="M3 13L13 2" stroke="#e04010" stroke-width="1.6" fill="none"/><path d="M2 6l12 5M5 2l6 12" stroke="#2060d0" stroke-width="1" fill="none"/></svg><div class="pb" style="left:284px"></div><svg class="abs" style="left:288px;top:5px" width="16" height="16" viewBox="0 0 16 16"><rect x="1.5" y="1.5" width="13" height="10" fill="#f4f8ff" stroke="#1858d0" stroke-width="1.3" stroke-dasharray="2.5 1.5"/><circle cx="10" cy="11" r="4.6" fill="#18a060" stroke="#e01010" stroke-width="1.4"/><path d="M8.5 7v8M11.5 7v8M6 9.5h8M6 12.5h8" stroke="#fff"/></svg><div class="pb" style="left:307px"></div><svg class="abs" style="left:311px;top:5px" width="16" height="16" viewBox="0 0 16 16"><rect x="1.5" y="1.5" width="14" height="13" fill="none" stroke="#1858d0" stroke-width="1.3" stroke-dasharray="2.5 1.5"/><path d="M5 5h7v3l-2 3v3H7v-3L5 8z" fill="#707070" stroke="#303030" stroke-width=".6"/><path d="M7 2v3M10 2v3" stroke="#e8b020" stroke-width="1.4"/></svg><div class="sep" style="left:332px;top:2px;height:22px"></div><div class="pb" style="left:341px"></div><svg class="abs" style="left:345px;top:5px" width="16" height="16" viewBox="0 0 16 16"><rect x="2.5" y="2.5" width="11" height="11" fill="#ffb050" stroke="#f07010" stroke-width="1.6"/><path d="M3 3l10 10M13 3L3 13" stroke="#f07010" stroke-width="1.4" fill="none"/></svg><div class="pb" style="left:364px"></div><svg class="abs" style="left:368px;top:5px" width="16" height="16" viewBox="0 0 16 16"><rect x="4" y="3.5" width="8" height="8" fill="#fff0e0" stroke="#f07010" stroke-width="2"/></svg><div class="pb" style="left:387px"></div><svg class="abs" style="left:391px;top:5px" width="16" height="16" viewBox="0 0 16 16"><circle cx="8" cy="8" r="4.5" fill="none" stroke="#f08020" stroke-width="1.5"/></svg><div class="pb" style="left:410px"></div><svg class="abs" style="left:414px;top:5px" width="16" height="16" viewBox="0 0 16 16"><path d="M8 4l4.5 8h-9z" stroke="#f08020" stroke-width="1.4" fill="none"/></svg><div class="pb" style="left:433px"></div><svg class="abs" style="left:437px;top:5px" width="16" height="16" viewBox="0 0 16 16"><path d="M4 4l8 8M12 4l-8 8" stroke="#f0a050" stroke-width="1.6" fill="none"/></svg><svg class="abs" style="left:461px;top:5px" width="16" height="16" viewBox="0 0 16 16"><path d="M3 13h9V4" stroke="#f0a020" stroke-width="2" fill="none"/><rect x="8" y="9" width="3" height="3" fill="#f0a020"/></svg><svg class="abs" style="left:483px;top:5px" width="16" height="16" viewBox="0 0 16 16"><path d="M5 3h6l-6 10h6L5 3" stroke="#f08020" stroke-width="1.2" fill="none"/></svg><svg class="abs" style="left:506px;top:5px" width="16" height="16" viewBox="0 0 16 16"><path d="M6 3h6l-6 10h6L6 3M1 8h6" stroke="#f08020" stroke-width="1.2" fill="none"/></svg><svg class="abs" style="left:529px;top:5px" width="16" height="16" viewBox="0 0 16 16"><path d="M2 9l4 4 8-9" stroke="#f0a020" stroke-width="2.2" fill="none"/></svg><div class="sep" style="left:551px;top:4px;height:18px"></div><div class="pb" style="left:556px"></div><svg class="abs" style="left:560px;top:5px" width="16" height="16" viewBox="0 0 16 16"><rect x="3" y="3" width="10" height="10" fill="#3858c0" stroke="#203080"/><rect x="5" y="5" width="6" height="6" fill="#e06030"/></svg><div class="pb" style="left:579px"></div><svg class="abs" style="left:583px;top:5px" width="16" height="16" viewBox="0 0 16 16"><rect x="3" y="3" width="10" height="10" fill="#3868d0"/><g fill="#f07010" stroke="#804010" stroke-width=".5"><rect x="1" y="1" width="4" height="4"/><rect x="11" y="1" width="4" height="4"/><rect x="1" y="11" width="4" height="4"/><rect x="11" y="11" width="4" height="4"/></g></svg><div class="sep" style="left:604px;top:4px;height:18px"></div><div class="combo" style="left:610px;width:83px">Авто<svg class="abs" style="right:4px;top:8px" width="9" height="5"><path d="M0 0h9L4.5 5z" fill="#000"/></svg></div><div class="combo" style="left:693px;width:132px"><span id="cb2" style="display:inline-block;transform-origin:0 0;transform:scaleX(0.9538)">Плоскость вида</span><svg class="abs" style="right:4px;top:8px" width="9" height="5"><path d="M0 0h9L4.5 5z" fill="#000"/></svg></div></div><div id="status" class="abs"><span class="st" id="s0" style="left:2px;transform:scaleX(0.9735)">Выбор пересечением: неактивный -- Использовать клавишу shift и колесо прокрутки для просмотра различных уровней иерархии компонентов</span><span class="st" id="s1" style="left:1384px;transform:scaleX(0.8469)">S</span><span class="st" id="s2" style="left:1431px;transform:scaleX(1.0136)">0</span><span class="st" id="s3" style="left:1471px;overflow:hidden;transform:scaleX(0.9066)">Панорам</span><span class="st" id="s4" style="left:1523px;transform:scaleX(0.9243)">Текущая стадия: 1</span><span class="st" id="s5" style="left:1751px;transform:scaleX(0.9495)">0 + 0 выбрано объектов:</span><div class="abs" style="left:1370px;top:0px;width:1px;height:18px;background:#c8c8c8"></div><div class="abs" style="left:1371px;top:0px;width:1px;height:18px;background:#fff"></div><div class="abs" style="left:1466px;top:0px;width:1px;height:18px;background:#c8c8c8"></div><div class="abs" style="left:1467px;top:0px;width:1px;height:18px;background:#fff"></div><div class="abs" style="left:1518px;top:0px;width:1px;height:18px;background:#c8c8c8"></div><div class="abs" style="left:1519px;top:0px;width:1px;height:18px;background:#fff"></div><div class="abs" style="left:1746px;top:0px;width:1px;height:18px;background:#c8c8c8"></div><div class="abs" style="left:1747px;top:0px;width:1px;height:18px;background:#fff"></div></div></body></html>
